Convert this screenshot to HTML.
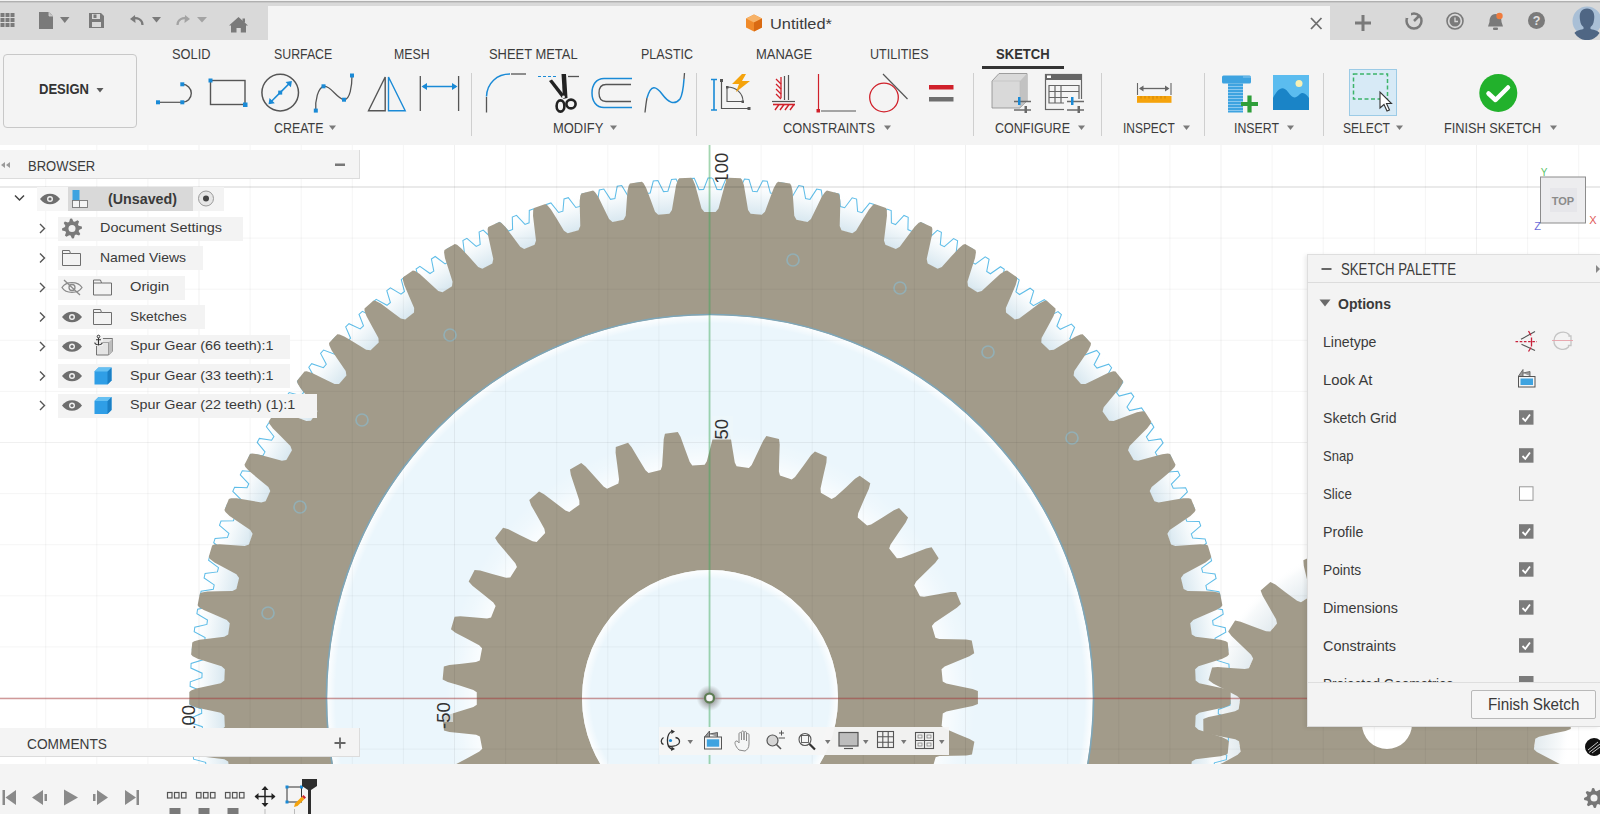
<!DOCTYPE html><html><head><meta charset="utf-8"><style>
*{margin:0;padding:0;box-sizing:border-box}
body{width:1600px;height:814px;overflow:hidden;position:relative;background:#f4f4f4;font-family:"Liberation Sans",sans-serif;color:#3a3a3a}
.a{position:absolute}
.t{position:absolute;white-space:nowrap;line-height:1;transform-origin:0 0}
</style></head><body>
<svg width="1600" height="619" viewBox="0 145 1600 619" style="position:absolute;left:0;top:145px">
<defs><radialGradient id="gapg" gradientUnits="userSpaceOnUse" cx="710" cy="698" r="522"><stop offset="0.93" stop-color="#d9e8f0" stop-opacity="0"/><stop offset="0.931" stop-color="#d9e8f0"/><stop offset="0.965" stop-color="#f1f7fa"/><stop offset="1" stop-color="#ffffff" stop-opacity="0"/></radialGradient><radialGradient id="gapm" gradientUnits="userSpaceOnUse" cx="710" cy="698" r="266"><stop offset="0.875" stop-color="#ffffff" stop-opacity="0"/><stop offset="0.876" stop-color="#ffffff" stop-opacity="0.75"/><stop offset="0.95" stop-color="#ffffff" stop-opacity="0.2"/><stop offset="1" stop-color="#ffffff" stop-opacity="0"/></radialGradient><radialGradient id="gaps" gradientUnits="userSpaceOnUse" cx="1387" cy="724" r="184"><stop offset="0.81" stop-color="#e3ebef" stop-opacity="0"/><stop offset="0.811" stop-color="#e3ebef"/><stop offset="0.95" stop-color="#f8fafb"/><stop offset="1" stop-color="#ffffff" stop-opacity="0"/></radialGradient><radialGradient id="inglow" gradientUnits="userSpaceOnUse" cx="710" cy="698" r="384"><stop offset="0.975" stop-color="#fff" stop-opacity="0"/><stop offset="0.997" stop-color="#fff" stop-opacity="0.9"/></radialGradient><radialGradient id="hglow" gradientUnits="userSpaceOnUse" cx="710" cy="698" r="128"><stop offset="0.93" stop-color="#fff" stop-opacity="0"/><stop offset="0.995" stop-color="#fff" stop-opacity="0.85"/></radialGradient><radialGradient id="omark"><stop offset="0.4" stop-color="#8a8a8a" stop-opacity="0.75"/><stop offset="1" stop-color="#9a9a9a" stop-opacity="0"/></radialGradient></defs>
<rect x="0" y="145" width="1600" height="619" fill="#ffffff"/>
<circle cx="710" cy="698" r="384" fill="#ebf6fc"/><circle cx="710" cy="698" r="384" fill="url(#inglow)"/>
<circle cx="710" cy="698" r="522" fill="url(#gapg)"/>
<circle cx="710" cy="698" r="266" fill="url(#gapm)"/>
<circle cx="1387" cy="724" r="184" fill="url(#gaps)"/>
<path d="M739.4,1217.2 L734.8,1217.4 L729.8,1206.1 L725.3,1206.3 L721.1,1217.9 L716.6,1218.0 L712.0,1206.5 L707.5,1206.5 L702.9,1218.0 L698.3,1217.9 L694.1,1206.3 L689.7,1206.1 L684.6,1217.4 L680.1,1217.1 L676.3,1205.4 L671.8,1205.1 L666.4,1216.2 L661.9,1215.8 L658.5,1203.9 L654.1,1203.4 L648.3,1214.3 L643.7,1213.8 L640.8,1201.8 L636.4,1201.1 L630.2,1211.8 L625.7,1211.1 L623.1,1199.0 L618.8,1198.2 L612.2,1208.7 L607.7,1207.8 L605.6,1195.7 L601.3,1194.7 L594.3,1205.0 L589.9,1203.9 L588.2,1191.7 L583.9,1190.6 L576.6,1200.6 L572.2,1199.4 L571.0,1187.1 L566.7,1185.9 L559.1,1195.6 L554.7,1194.3 L553.9,1181.9 L549.6,1180.6 L541.7,1190.0 L537.4,1188.5 L537.0,1176.2 L532.8,1174.6 L524.5,1183.8 L520.3,1182.2 L520.3,1169.8 L516.2,1168.1 L507.6,1177.0 L503.4,1175.2 L503.9,1162.9 L499.8,1161.0 L490.9,1169.6 L486.8,1167.7 L487.7,1155.3 L483.7,1153.4 L474.5,1161.6 L470.4,1159.5 L471.8,1147.2 L467.8,1145.1 L458.4,1153.1 L454.4,1150.8 L456.2,1138.6 L452.3,1136.4 L442.6,1144.0 L438.7,1141.6 L440.9,1129.4 L437.1,1127.1 L427.1,1134.3 L423.3,1131.8 L425.9,1119.7 L422.2,1117.2 L411.9,1124.1 L408.2,1121.5 L411.3,1109.5 L407.7,1106.9 L397.2,1113.4 L393.5,1110.6 L397.0,1098.8 L393.5,1096.0 L382.8,1102.1 L379.2,1099.2 L383.1,1087.5 L379.7,1084.6 L368.8,1090.4 L365.4,1087.4 L369.7,1075.8 L366.4,1072.8 L355.2,1078.2 L351.9,1075.1 L356.6,1063.6 L353.4,1060.5 L342.1,1065.5 L338.9,1062.3 L344.0,1051.0 L340.9,1047.8 L329.4,1052.4 L326.3,1049.0 L331.8,1037.9 L328.9,1034.6 L317.2,1038.8 L314.3,1035.3 L320.1,1024.5 L317.3,1021.0 L305.5,1024.8 L302.7,1021.2 L308.9,1010.6 L306.2,1007.0 L294.3,1010.4 L291.6,1006.7 L298.2,996.3 L295.6,992.7 L283.6,995.6 L281.0,991.9 L288.0,981.7 L285.5,978.0 L273.4,980.5 L271.0,976.6 L278.3,966.7 L275.9,962.9 L263.8,965.0 L261.4,961.1 L269.1,951.4 L266.9,947.5 L254.7,949.2 L252.5,945.1 L260.5,935.7 L258.4,931.8 L246.1,933.0 L244.1,928.9 L252.4,919.8 L250.5,915.8 L238.2,916.6 L236.3,912.4 L244.9,903.6 L243.1,899.5 L230.8,899.9 L229.0,895.7 L238.0,887.2 L236.4,883.0 L224.0,883.0 L222.4,878.7 L231.7,870.5 L230.2,866.3 L217.8,865.8 L216.4,861.5 L225.9,853.6 L224.5,849.4 L212.2,848.4 L210.9,844.0 L220.7,836.5 L219.5,832.2 L207.3,830.9 L206.1,826.4 L216.2,819.3 L215.1,814.9 L202.9,813.1 L201.9,808.7 L212.2,801.9 L211.3,797.5 L199.2,795.3 L198.3,790.8 L208.9,784.3 L208.1,779.9 L196.1,777.3 L195.4,772.8 L206.2,766.7 L205.6,762.3 L193.6,759.2 L193.1,754.7 L204.1,749.0 L203.6,744.5 L191.8,741.0 L191.4,736.5 L202.6,731.2 L202.3,726.7 L190.6,722.8 L190.4,718.3 L201.7,713.3 L201.6,708.9 L190.0,704.6 L190.0,700.0 L201.5,695.5 L201.5,691.0 L190.1,686.3 L190.3,681.8 L201.9,677.7 L202.1,673.2 L190.9,668.1 L191.1,663.5 L202.9,659.8 L203.3,655.4 L192.2,649.9 L192.7,645.3 L204.6,642.1 L205.1,637.6 L194.2,631.7 L194.8,627.2 L206.9,624.4 L207.5,620.0 L196.9,613.7 L197.6,609.2 L209.8,606.8 L210.6,602.4 L200.2,595.7 L201.1,591.3 L213.3,589.3 L214.2,584.9 L204.1,577.9 L205.1,573.5 L217.4,571.9 L218.5,567.6 L208.6,560.2 L209.8,555.8 L222.1,554.7 L223.4,550.4 L213.7,542.7 L215.1,538.4 L227.4,537.6 L228.9,533.4 L219.5,525.4 L221.0,521.1 L233.4,520.8 L234.9,516.6 L225.8,508.3 L227.5,504.0 L239.9,504.2 L241.6,500.1 L232.8,491.4 L234.6,487.2 L247.0,487.8 L248.8,483.8 L240.3,474.8 L242.3,470.7 L254.6,471.7 L256.6,467.7 L248.5,458.4 L250.6,454.4 L262.9,455.8 L265.0,451.9 L257.2,442.4 L259.4,438.4 L271.6,440.3 L273.9,436.5 L266.4,426.7 L268.8,422.8 L280.9,425.1 L283.4,421.3 L276.2,411.3 L278.7,407.5 L290.8,410.2 L293.3,406.5 L286.5,396.2 L289.2,392.5 L301.1,395.7 L303.8,392.1 L297.4,381.5 L300.2,377.9 L312.0,381.5 L314.8,378.0 L308.8,367.2 L311.7,363.7 L323.4,367.7 L326.3,364.3 L320.6,353.4 L323.6,350.0 L335.2,354.4 L338.2,351.1 L332.9,339.9 L336.1,336.6 L347.5,341.4 L350.6,338.2 L345.7,326.9 L349.0,323.7 L360.2,328.9 L363.5,325.9 L359.0,314.3 L362.4,311.3 L373.4,316.9 L376.7,313.9 L372.7,302.3 L376.2,299.3 L387.0,305.3 L390.4,302.5 L386.8,290.7 L390.4,287.8 L401.0,294.2 L404.5,291.5 L401.3,279.6 L404.9,276.9 L415.3,283.6 L419.0,281.0 L416.1,269.0 L419.9,266.4 L430.0,273.5 L433.8,271.1 L431.4,259.0 L435.2,256.5 L445.1,263.9 L448.9,261.6 L446.9,249.4 L450.9,247.2 L460.5,254.9 L464.4,252.7 L462.9,240.5 L466.9,238.3 L476.2,246.4 L480.2,244.4 L479.1,232.1 L483.2,230.1 L492.2,238.5 L496.2,236.6 L495.6,224.3 L499.7,222.4 L508.5,231.1 L512.6,229.4 L512.3,217.0 L516.5,215.3 L525.0,224.4 L529.1,222.8 L529.3,210.4 L533.6,208.8 L541.7,218.2 L545.9,216.7 L546.5,204.4 L550.9,202.9 L558.6,212.5 L562.9,211.2 L564.0,198.9 L568.3,197.7 L575.8,207.5 L580.1,206.4 L581.6,194.1 L586.0,193.0 L593.1,203.1 L597.4,202.1 L599.3,189.9 L603.8,189.0 L610.5,199.3 L614.9,198.5 L617.2,186.3 L621.7,185.5 L628.1,196.1 L632.5,195.4 L635.2,183.4 L639.8,182.8 L645.7,193.6 L650.2,193.0 L653.3,181.1 L657.9,180.6 L663.5,191.6 L667.9,191.2 L671.5,179.4 L676.1,179.1 L681.3,190.3 L685.7,190.1 L689.7,178.4 L694.3,178.2 L699.1,189.6 L703.6,189.5 L708.0,178.0 L712.6,178.0 L717.0,189.5 L721.4,189.6 L726.2,178.3 L730.8,178.4 L734.8,190.1 L739.3,190.3 L744.5,179.1 L749.0,179.5 L752.6,191.3 L757.1,191.7 L762.7,180.7 L767.2,181.2 L770.4,193.1 L774.8,193.6 L780.8,182.8 L785.3,183.5 L788.0,195.5 L792.5,196.2 L798.8,185.6 L803.3,186.4 L805.6,198.6 L810.0,199.4 L816.7,189.1 L821.2,190.0 L823.1,202.2 L827.4,203.2 L834.5,193.1 L839.0,194.2 L840.4,206.5 L844.7,207.7 L852.2,197.8 L856.6,199.1 L857.6,211.4 L861.9,212.7 L869.6,203.1 L874.0,204.5 L874.6,216.9 L878.8,218.3 L886.9,209.0 L891.2,210.6 L891.4,222.9 L895.5,224.6 L904.0,215.5 L908.2,217.3 L907.9,229.6 L912.0,231.4 L920.8,222.6 L924.9,224.5 L924.2,236.8 L928.3,238.7 L937.3,230.3 L941.4,232.3 L940.3,244.6 L944.3,246.7 L953.6,238.6 L957.6,240.7 L956.1,253.0 L960.0,255.2 L969.6,247.4 L973.5,249.7 L971.5,261.9 L975.3,264.2 L985.2,256.8 L989.1,259.2 L986.7,271.4 L990.4,273.8 L1000.5,266.7 L1004.3,269.3 L1001.5,281.3 L1005.1,283.9 L1015.5,277.2 L1019.2,279.9 L1015.9,291.8 L1019.5,294.5 L1030.1,288.2 L1033.7,291.0 L1030.0,302.8 L1033.4,305.6 L1044.3,299.7 L1047.7,302.6 L1043.7,314.3 L1047.0,317.2 L1058.0,311.6 L1061.4,314.7 L1056.9,326.2 L1060.2,329.3 L1071.4,324.1 L1074.6,327.3 L1069.8,338.6 L1072.9,341.8 L1084.3,337.0 L1087.4,340.3 L1082.1,351.5 L1085.2,354.8 L1096.7,350.4 L1099.8,353.8 L1094.1,364.7 L1097.0,368.1 L1108.7,364.2 L1111.6,367.7 L1105.5,378.4 L1108.3,381.9 L1120.2,378.4 L1122.9,382.0 L1116.5,392.5 L1119.2,396.1 L1131.1,392.9 L1133.8,396.6 L1127.0,407.0 L1129.5,410.6 L1141.6,407.9 L1144.1,411.7 L1136.9,421.8 L1139.3,425.5 L1151.5,423.2 L1153.9,427.1 L1146.4,436.9 L1148.6,440.8 L1160.8,438.9 L1163.1,442.9 L1155.3,452.4 L1157.4,456.3 L1169.7,454.9 L1171.8,458.9 L1163.6,468.2 L1165.6,472.2 L1177.9,471.2 L1179.9,475.3 L1171.4,484.2 L1173.2,488.3 L1185.6,487.7 L1187.4,491.9 L1178.6,500.6 L1180.3,504.7 L1192.7,504.5 L1194.4,508.8 L1185.2,517.1 L1186.8,521.3 L1199.2,521.6 L1200.7,525.9 L1191.3,533.9 L1192.7,538.1 L1205.1,538.9 L1206.4,543.2 L1196.8,550.9 L1198.0,555.2 L1210.3,556.3 L1211.6,560.7 L1201.6,568.1 L1202.7,572.4 L1215.0,574.0 L1216.1,578.4 L1205.9,585.4 L1206.8,589.8 L1219.0,591.8 L1220.0,596.3 L1209.5,602.9 L1210.3,607.3 L1222.5,609.7 L1223.2,614.2 L1212.6,620.5 L1213.2,624.9 L1225.2,627.8 L1225.8,632.3 L1215.0,638.2 L1215.5,642.6 L1227.4,645.9 L1227.8,650.4 L1216.8,655.9 L1217.1,660.4 L1228.9,664.1 L1229.2,668.6 L1217.9,673.7 L1218.1,678.2 L1229.8,682.3 L1229.9,686.9 L1218.5,691.6 L1218.5,696.0 L1230.0,700.6 L1230.0,705.1 L1218.4,709.4 L1218.3,713.9 L1229.6,718.8 L1229.4,723.4 L1217.7,727.3 L1217.4,731.7 L1228.5,737.0 L1228.2,741.6 L1216.3,745.1 L1215.9,749.5 L1226.8,755.2 L1226.3,759.7 L1214.4,762.8 L1213.8,767.2 L1224.5,773.3 L1223.8,777.8 L1211.8,780.5 L1211.0,784.9 L1221.6,791.3 L1220.7,795.8 L1208.6,798.0 L1207.7,802.4 L1218.0,809.2 L1217.0,813.7 L1204.8,815.4 L1203.7,819.8 L1213.8,827.0 L1212.6,831.4 L1200.3,832.7 L1199.1,837.0 L1208.9,844.6 L1207.6,848.9 L1195.3,849.9 L1193.9,854.1 L1203.5,862.0 L1202.0,866.3 L1189.7,866.8 L1188.2,871.0 L1197.4,879.2 L1195.8,883.5 L1183.4,883.5 L1181.8,887.7 L1190.7,896.2 L1189.0,900.4 L1176.6,900.0 L1174.9,904.1 L1183.5,912.9 L1181.6,917.1 L1169.3,916.3 L1167.3,920.3 L1175.7,929.4 L1173.6,933.5 L1161.3,932.3 L1159.2,936.2 L1167.3,945.6 L1165.1,949.6 L1152.8,948.0 L1150.6,951.8 L1158.3,961.5 L1156.0,965.4 L1143.8,963.3 L1141.4,967.1 L1148.8,977.1 L1146.3,980.9 L1134.2,978.4 L1131.7,982.1 L1138.7,992.3 L1136.1,996.1 L1124.1,993.1 L1121.5,996.7 L1128.1,1007.2 L1125.4,1010.8 L1113.5,1007.5 L1110.8,1011.0 L1117.0,1021.7 L1114.1,1025.2 L1102.4,1021.4 L1099.5,1024.9 L1105.4,1035.7 L1102.4,1039.2 L1090.8,1035.0 L1087.8,1038.3 L1093.3,1049.4 L1090.2,1052.8 L1078.7,1048.2 L1075.6,1051.4 L1080.7,1062.6 L1077.5,1065.9 L1066.2,1060.9 L1063.0,1064.0 L1067.7,1075.4 L1064.4,1078.6 L1053.2,1073.2 L1049.9,1076.2 L1054.2,1087.8 L1050.8,1090.8 L1039.9,1085.0 L1036.5,1087.9 L1040.3,1099.6 L1036.8,1102.5 L1026.1,1096.3 L1022.6,1099.1 L1026.0,1110.9 L1022.4,1113.7 L1011.9,1107.2 L1008.3,1109.8 L1011.4,1121.8 L1007.6,1124.4 L997.4,1117.5 L993.7,1120.0 L996.3,1132.1 L992.5,1134.6 L982.5,1127.3 L978.7,1129.7 L980.9,1141.9 L977.0,1144.2 L967.2,1136.6 L963.4,1138.9 L965.1,1151.1 L961.2,1153.3 L951.7,1145.4 L947.7,1147.5 L949.1,1159.8 L945.0,1161.9 L935.8,1153.6 L931.8,1155.6 L932.7,1167.9 L928.6,1169.8 L919.7,1161.2 L915.6,1163.1 L916.1,1175.4 L911.9,1177.2 L903.3,1168.3 L899.2,1170.0 L899.2,1182.4 L895.0,1184.0 L886.7,1174.8 L882.5,1176.3 L882.1,1188.7 L877.8,1190.2 L869.9,1180.7 L865.6,1182.1 L864.8,1194.4 L860.4,1195.8 L852.8,1186.0 L848.5,1187.3 L847.3,1199.6 L842.9,1200.7 L835.6,1190.7 L831.3,1191.8 L829.6,1204.1 L825.1,1205.1 L818.2,1194.8 L813.9,1195.8 L811.7,1208.0 L807.3,1208.8 L800.7,1198.3 L796.3,1199.1 L793.8,1211.2 L789.3,1211.9 L783.1,1201.2 L778.7,1201.8 L775.7,1213.8 L771.2,1214.4 L765.4,1203.5 L761.0,1203.9 L757.6,1215.8 L753.0,1216.2 L747.6,1205.1 L743.2,1205.4 L739.4,1217.2 L734.8,1217.4 L729.8,1206.1 L725.3,1206.3 L721.1,1217.9 L716.6,1218.0 L712.0,1206.5 L707.5,1206.5 L702.9,1218.0 L698.3,1217.9 L694.1,1206.3 L689.7,1206.1" fill="none" stroke="#5fbde8" stroke-width="1.05"/>
<text transform="translate(194.55,742) rotate(-90)" font-family="Liberation Sans" font-size="18.5" fill="#333">-100</text>
<rect x="712" y="148" width="21" height="30" fill="#ffffff" fill-opacity="0.85"/>
<text transform="translate(727.75,183.65) rotate(-90)" font-family="Liberation Sans" font-size="18.5" fill="#333">100</text>
<path d="M715.63,212.03 L718.50,208.60 L722.16,194.80 L724.95,184.46 L727.20,179.32 L728.78,177.64 L740.77,178.21 L742.18,180.03 L743.93,185.36 L745.73,195.92 L748.06,210.01 L750.59,213.70 L761.80,214.77 L764.98,211.63 L769.94,198.23 L773.70,188.20 L776.43,183.30 L778.16,181.78 L790.04,183.49 L791.27,185.44 L792.51,190.91 L793.29,201.59 L794.27,215.84 L796.44,219.75 L807.50,221.88 L810.96,219.06 L817.17,206.19 L821.87,196.57 L825.05,191.95 L826.92,190.60 L838.58,193.43 L839.63,195.48 L840.33,201.05 L840.10,211.75 L839.72,226.03 L841.51,230.13 L852.32,233.30 L856.03,230.82 L863.43,218.61 L869.03,209.47 L872.63,205.18 L874.62,204.01 L885.96,207.93 L886.81,210.08 L886.98,215.69 L885.73,226.32 L884.00,240.50 L885.39,244.75 L895.85,248.94 L899.78,246.82 L908.31,235.36 L914.75,226.80 L918.74,222.87 L920.83,221.89 L931.75,226.88 L932.39,229.10 L932.03,234.69 L929.77,245.16 L926.70,259.11 L927.68,263.47 L937.69,268.64 L941.81,266.90 L951.39,256.31 L958.61,248.40 L962.96,244.86 L965.14,244.09 L975.53,250.09 L975.95,252.36 L975.06,257.90 L971.82,268.11 L967.44,281.70 L967.99,286.13 L977.47,292.22 L981.74,290.89 L992.28,281.25 L1000.22,274.06 L1004.89,270.96 L1007.13,270.40 L1016.90,277.36 L1017.11,279.66 L1015.70,285.09 L1011.50,294.94 L1005.84,308.06 L1005.98,312.52 L1014.83,319.49 L1019.20,318.56 L1030.62,309.97 L1039.20,303.57 L1044.15,300.92 L1046.43,300.58 L1055.50,308.44 L1055.48,310.74 L1053.56,316.01 L1048.45,325.42 L1041.57,337.94 L1041.28,342.40 L1049.43,350.18 L1053.87,349.67 L1066.05,342.20 L1075.21,336.65 L1080.38,334.48 L1082.68,334.36 L1090.96,343.04 L1090.73,345.34 L1088.32,350.40 L1082.33,359.28 L1074.30,371.09 L1073.58,375.50 L1080.96,384.02 L1085.43,383.94 L1098.26,377.66 L1107.90,373.00 L1113.26,371.34 L1115.56,371.43 L1122.98,380.86 L1122.53,383.13 L1119.65,387.94 L1112.84,396.21 L1103.72,407.20 L1102.59,411.52 L1109.13,420.70 L1113.58,421.04 L1126.95,416.02 L1136.99,412.30 L1142.48,411.15 L1144.77,411.46 L1151.26,421.55 L1150.59,423.76 L1147.26,428.28 L1139.71,435.87 L1129.58,445.94 L1128.04,450.14 L1133.68,459.90 L1138.08,460.66 L1151.87,456.93 L1162.22,454.18 L1167.79,453.56 L1170.04,454.08 L1175.54,464.75 L1174.66,466.89 L1170.92,471.07 L1162.68,477.90 L1151.64,486.97 L1149.71,491.00 L1154.39,501.25 L1158.70,502.43 L1172.78,500.02 L1183.35,498.27 L1188.95,498.18 L1191.14,498.92 L1195.60,510.06 L1194.53,512.10 L1190.41,515.91 L1181.55,521.93 L1169.70,529.90 L1167.40,533.73 L1171.08,544.38 L1175.26,545.97 L1189.50,544.91 L1200.19,544.17 L1205.78,544.61 L1207.88,545.55 L1211.27,557.07 L1210.00,559.00 L1205.54,562.40 L1196.15,567.55 L1183.60,574.36 L1180.94,577.95 L1183.60,588.90 L1187.60,590.88 L1201.89,591.18 L1212.59,591.46 L1218.11,592.43 L1220.12,593.57 L1222.39,605.35 L1220.95,607.16 L1216.19,610.11 L1206.35,614.35 L1193.21,619.94 L1190.22,623.26 L1191.82,634.42 L1195.62,636.76 L1209.81,638.42 L1220.44,639.72 L1225.85,641.21 L1227.74,642.53 L1228.88,654.48 L1227.27,656.14 L1222.25,658.63 L1212.05,661.91 L1198.44,666.22 L1195.15,669.25 L1195.68,680.50 L1199.25,683.20 L1213.21,686.20 L1223.67,688.50 L1228.91,690.50 L1230.67,692.00 L1230.67,704.00 L1228.91,705.50 L1223.67,707.50 L1213.21,709.80 L1199.25,712.80 L1195.68,715.50 L1195.15,726.75 L1198.44,729.78 L1212.05,734.09 L1222.25,737.37 L1227.27,739.86 L1228.88,741.52 L1227.74,753.47 L1225.85,754.79 L1220.44,756.28 L1209.81,757.58 L1195.62,759.24 L1191.82,761.58 L1190.22,772.74 L1193.21,776.06 L1206.35,781.65 L1216.19,785.89 L1220.95,788.84 L1222.39,790.65 L1220.12,802.43 L1218.11,803.57 L1212.59,804.54 L1201.89,804.82 L1187.60,805.12 L1183.60,807.10 L1180.94,818.05 L1183.60,821.64 L1196.15,828.45 L1205.54,833.60 L1210.00,837.00 L1211.27,838.93 L1207.88,850.45 L1205.78,851.39 L1200.19,851.83 L1189.50,851.09 L1175.26,850.03 L1171.08,851.62 L1167.40,862.27 L1169.70,866.10 L1181.55,874.07 L1190.41,880.09 L1194.53,883.90 L1195.60,885.94 L1191.14,897.08 L1188.95,897.82 L1183.35,897.73 L1172.78,895.98 L1158.70,893.57 L1154.39,894.75 L1149.71,905.00 L1151.64,909.03 L1162.68,918.10 L1170.92,924.93 L1174.66,929.11 L1175.54,931.25 L1170.04,941.92 L1167.79,942.44 L1162.22,941.82 L1151.87,939.07 L1138.08,935.34 L1133.68,936.10 L1128.04,945.86 L1129.58,950.06 L1139.71,960.13 L1147.26,967.72 L1150.59,972.24 L1151.26,974.45 L1144.77,984.54 L1142.48,984.85 L1136.99,983.70 L1126.95,979.98 L1113.58,974.96 L1109.13,975.30 L1102.59,984.48 L1103.72,988.80 L1112.84,999.79 L1119.65,1008.06 L1122.53,1012.87 L1122.98,1015.14 L1115.56,1024.57 L1113.26,1024.66 L1107.90,1023.00 L1098.26,1018.34 L1085.43,1012.06 L1080.96,1011.98 L1073.58,1020.50 L1074.30,1024.91 L1082.33,1036.72 L1088.32,1045.60 L1090.73,1050.66 L1090.96,1052.96 L1082.68,1061.64 L1080.38,1061.52 L1075.21,1059.35 L1066.05,1053.80 L1053.87,1046.33 L1049.43,1045.82 L1041.28,1053.60 L1041.57,1058.06 L1048.45,1070.58 L1053.56,1079.99 L1055.48,1085.26 L1055.50,1087.56 L1046.43,1095.42 L1044.15,1095.08 L1039.20,1092.43 L1030.62,1086.03 L1019.20,1077.44 L1014.83,1076.51 L1005.98,1083.48 L1005.84,1087.94 L1011.50,1101.06 L1015.70,1110.91 L1017.11,1116.34 L1016.90,1118.64 L1007.13,1125.60 L1004.89,1125.04 L1000.22,1121.94 L992.28,1114.75 L981.74,1105.11 L977.47,1103.78 L967.99,1109.87 L967.44,1114.30 L971.82,1127.89 L975.06,1138.10 L975.95,1143.64 L975.53,1145.91 L965.14,1151.91 L962.96,1151.14 L958.61,1147.60 L951.39,1139.69 L941.81,1129.10 L937.69,1127.36 L927.68,1132.53 L926.70,1136.89 L929.77,1150.84 L932.03,1161.31 L932.39,1166.90 L931.75,1169.12 L920.83,1174.11 L918.74,1173.13 L914.75,1169.20 L908.31,1160.64 L899.78,1149.18 L895.85,1147.06 L885.39,1151.25 L884.00,1155.50 L885.73,1169.68 L886.98,1180.31 L886.81,1185.92 L885.96,1188.07 L874.62,1191.99 L872.63,1190.82 L869.03,1186.53 L863.43,1177.39 L856.03,1165.18 L852.32,1162.70 L841.51,1165.87 L839.72,1169.97 L840.10,1184.25 L840.33,1194.95 L839.63,1200.52 L838.58,1202.57 L826.92,1205.40 L825.05,1204.05 L821.87,1199.43 L817.17,1189.81 L810.96,1176.94 L807.50,1174.12 L796.44,1176.25 L794.27,1180.16 L793.29,1194.41 L792.51,1205.09 L791.27,1210.56 L790.04,1212.51 L778.16,1214.22 L776.43,1212.70 L773.70,1207.80 L769.94,1197.77 L764.98,1184.37 L761.80,1181.23 L750.59,1182.30 L748.06,1185.99 L745.73,1200.08 L743.93,1210.64 L742.18,1215.97 L740.77,1217.79 L728.78,1218.36 L727.20,1216.68 L724.95,1211.54 L722.16,1201.20 L718.50,1187.40 L715.63,1183.97 L704.37,1183.97 L701.50,1187.40 L697.84,1201.20 L695.05,1211.54 L692.80,1216.68 L691.22,1218.36 L679.23,1217.79 L677.82,1215.97 L676.07,1210.64 L674.27,1200.08 L671.94,1185.99 L669.41,1182.30 L658.20,1181.23 L655.02,1184.37 L650.06,1197.77 L646.30,1207.80 L643.57,1212.70 L641.84,1214.22 L629.96,1212.51 L628.73,1210.56 L627.49,1205.09 L626.71,1194.41 L625.73,1180.16 L623.56,1176.25 L612.50,1174.12 L609.04,1176.94 L602.83,1189.81 L598.13,1199.43 L594.95,1204.05 L593.08,1205.40 L581.42,1202.57 L580.37,1200.52 L579.67,1194.95 L579.90,1184.25 L580.28,1169.97 L578.49,1165.87 L567.68,1162.70 L563.97,1165.18 L556.57,1177.39 L550.97,1186.53 L547.37,1190.82 L545.38,1191.99 L534.04,1188.07 L533.19,1185.92 L533.02,1180.31 L534.27,1169.68 L536.00,1155.50 L534.61,1151.25 L524.15,1147.06 L520.22,1149.18 L511.69,1160.64 L505.25,1169.20 L501.26,1173.13 L499.17,1174.11 L488.25,1169.12 L487.61,1166.90 L487.97,1161.31 L490.23,1150.84 L493.30,1136.89 L492.32,1132.53 L482.31,1127.36 L478.19,1129.10 L468.61,1139.69 L461.39,1147.60 L457.04,1151.14 L454.86,1151.91 L444.47,1145.91 L444.05,1143.64 L444.94,1138.10 L448.18,1127.89 L452.56,1114.30 L452.01,1109.87 L442.53,1103.78 L438.26,1105.11 L427.72,1114.75 L419.78,1121.94 L415.11,1125.04 L412.87,1125.60 L403.10,1118.64 L402.89,1116.34 L404.30,1110.91 L408.50,1101.06 L414.16,1087.94 L414.02,1083.48 L405.17,1076.51 L400.80,1077.44 L389.38,1086.03 L380.80,1092.43 L375.85,1095.08 L373.57,1095.42 L364.50,1087.56 L364.52,1085.26 L366.44,1079.99 L371.55,1070.58 L378.43,1058.06 L378.72,1053.60 L370.57,1045.82 L366.13,1046.33 L353.95,1053.80 L344.79,1059.35 L339.62,1061.52 L337.32,1061.64 L329.04,1052.96 L329.27,1050.66 L331.68,1045.60 L337.67,1036.72 L345.70,1024.91 L346.42,1020.50 L339.04,1011.98 L334.57,1012.06 L321.74,1018.34 L312.10,1023.00 L306.74,1024.66 L304.44,1024.57 L297.02,1015.14 L297.47,1012.87 L300.35,1008.06 L307.16,999.79 L316.28,988.80 L317.41,984.48 L310.87,975.30 L306.42,974.96 L293.05,979.98 L283.01,983.70 L277.52,984.85 L275.23,984.54 L268.74,974.45 L269.41,972.24 L272.74,967.72 L280.29,960.13 L290.42,950.06 L291.96,945.86 L286.32,936.10 L281.92,935.34 L268.13,939.07 L257.78,941.82 L252.21,942.44 L249.96,941.92 L244.46,931.25 L245.34,929.11 L249.08,924.93 L257.32,918.10 L268.36,909.03 L270.29,905.00 L265.61,894.75 L261.30,893.57 L247.22,895.98 L236.65,897.73 L231.05,897.82 L228.86,897.08 L224.40,885.94 L225.47,883.90 L229.59,880.09 L238.45,874.07 L250.30,866.10 L252.60,862.27 L248.92,851.62 L244.74,850.03 L230.50,851.09 L219.81,851.83 L214.22,851.39 L212.12,850.45 L208.73,838.93 L210.00,837.00 L214.46,833.60 L223.85,828.45 L236.40,821.64 L239.06,818.05 L236.40,807.10 L232.40,805.12 L218.11,804.82 L207.41,804.54 L201.89,803.57 L199.88,802.43 L197.61,790.65 L199.05,788.84 L203.81,785.89 L213.65,781.65 L226.79,776.06 L229.78,772.74 L228.18,761.58 L224.38,759.24 L210.19,757.58 L199.56,756.28 L194.15,754.79 L192.26,753.47 L191.12,741.52 L192.73,739.86 L197.75,737.37 L207.95,734.09 L221.56,729.78 L224.85,726.75 L224.32,715.50 L220.75,712.80 L206.79,709.80 L196.33,707.50 L191.09,705.50 L189.33,704.00 L189.33,692.00 L191.09,690.50 L196.33,688.50 L206.79,686.20 L220.75,683.20 L224.32,680.50 L224.85,669.25 L221.56,666.22 L207.95,661.91 L197.75,658.63 L192.73,656.14 L191.12,654.48 L192.26,642.53 L194.15,641.21 L199.56,639.72 L210.19,638.42 L224.38,636.76 L228.18,634.42 L229.78,623.26 L226.79,619.94 L213.65,614.35 L203.81,610.11 L199.05,607.16 L197.61,605.35 L199.88,593.57 L201.89,592.43 L207.41,591.46 L218.11,591.18 L232.40,590.88 L236.40,588.90 L239.06,577.95 L236.40,574.36 L223.85,567.55 L214.46,562.40 L210.00,559.00 L208.73,557.07 L212.12,545.55 L214.22,544.61 L219.81,544.17 L230.50,544.91 L244.74,545.97 L248.92,544.38 L252.60,533.73 L250.30,529.90 L238.45,521.93 L229.59,515.91 L225.47,512.10 L224.40,510.06 L228.86,498.92 L231.05,498.18 L236.65,498.27 L247.22,500.02 L261.30,502.43 L265.61,501.25 L270.29,491.00 L268.36,486.97 L257.32,477.90 L249.08,471.07 L245.34,466.89 L244.46,464.75 L249.96,454.08 L252.21,453.56 L257.78,454.18 L268.13,456.93 L281.92,460.66 L286.32,459.90 L291.96,450.14 L290.42,445.94 L280.29,435.87 L272.74,428.28 L269.41,423.76 L268.74,421.55 L275.23,411.46 L277.52,411.15 L283.01,412.30 L293.05,416.02 L306.42,421.04 L310.87,420.70 L317.41,411.52 L316.28,407.20 L307.16,396.21 L300.35,387.94 L297.47,383.13 L297.02,380.86 L304.44,371.43 L306.74,371.34 L312.10,373.00 L321.74,377.66 L334.57,383.94 L339.04,384.02 L346.42,375.50 L345.70,371.09 L337.67,359.28 L331.68,350.40 L329.27,345.34 L329.04,343.04 L337.32,334.36 L339.62,334.48 L344.79,336.65 L353.95,342.20 L366.13,349.67 L370.57,350.18 L378.72,342.40 L378.43,337.94 L371.55,325.42 L366.44,316.01 L364.52,310.74 L364.50,308.44 L373.57,300.58 L375.85,300.92 L380.80,303.57 L389.38,309.97 L400.80,318.56 L405.17,319.49 L414.02,312.52 L414.16,308.06 L408.50,294.94 L404.30,285.09 L402.89,279.66 L403.10,277.36 L412.87,270.40 L415.11,270.96 L419.78,274.06 L427.72,281.25 L438.26,290.89 L442.53,292.22 L452.01,286.13 L452.56,281.70 L448.18,268.11 L444.94,257.90 L444.05,252.36 L444.47,250.09 L454.86,244.09 L457.04,244.86 L461.39,248.40 L468.61,256.31 L478.19,266.90 L482.31,268.64 L492.32,263.47 L493.30,259.11 L490.23,245.16 L487.97,234.69 L487.61,229.10 L488.25,226.88 L499.17,221.89 L501.26,222.87 L505.25,226.80 L511.69,235.36 L520.22,246.82 L524.15,248.94 L534.61,244.75 L536.00,240.50 L534.27,226.32 L533.02,215.69 L533.19,210.08 L534.04,207.93 L545.38,204.01 L547.37,205.18 L550.97,209.47 L556.57,218.61 L563.97,230.82 L567.68,233.30 L578.49,230.13 L580.28,226.03 L579.90,211.75 L579.67,201.05 L580.37,195.48 L581.42,193.43 L593.08,190.60 L594.95,191.95 L598.13,196.57 L602.83,206.19 L609.04,219.06 L612.50,221.88 L623.56,219.75 L625.73,215.84 L626.71,201.59 L627.49,190.91 L628.73,185.44 L629.96,183.49 L641.84,181.78 L643.57,183.30 L646.30,188.20 L650.06,198.23 L655.02,211.63 L658.20,214.77 L669.41,213.70 L671.94,210.01 L674.27,195.92 L676.07,185.36 L677.82,180.03 L679.23,178.21 L691.22,177.64 L692.80,179.32 L695.05,184.46 L697.84,194.80 L701.50,208.60 L704.37,212.03Z M327.00,698.00 a383.00,383.00 0 1,0 766.00,0 a383.00,383.00 0 1,0 -766.00,0Z" fill="#a29b8a" fill-rule="evenodd"/>
<circle cx="710" cy="698" r="383.5" fill="none" stroke="#7ea6b8" stroke-width="1.6"/>
<path d="M704.67,464.76 L706.83,461.25 L710.46,447.35 L713.52,435.23 L715.75,430.06 L728.74,430.66 L730.50,436.01 L732.43,448.36 L734.78,462.53 L736.61,466.22 L748.91,467.97 L751.69,464.93 L757.89,451.97 L763.18,440.64 L766.36,435.99 L779.00,439.03 L779.71,444.62 L779.27,457.11 L778.90,471.48 L779.99,475.45 L791.74,479.49 L795.04,477.03 L803.59,465.48 L810.93,455.36 L814.92,451.39 L826.76,456.77 L826.40,462.39 L823.61,474.58 L820.52,488.61 L820.85,492.72 L831.61,498.90 L835.33,497.12 L845.90,487.39 L855.02,478.84 L859.70,475.71 L870.30,483.23 L868.89,488.68 L863.84,500.11 L858.15,513.31 L857.69,517.40 L867.09,525.52 L871.08,524.47 L883.30,516.91 L893.88,510.25 L899.06,508.06 L908.05,517.45 L905.63,522.53 L898.51,532.80 L890.43,544.68 L889.20,548.62 L896.90,558.37 L901.01,558.09 L914.44,552.99 L926.09,548.44 L931.59,547.27 L938.64,558.19 L935.30,562.72 L926.37,571.46 L916.18,581.60 L914.24,585.23 L919.95,596.26 L924.04,596.76 L938.19,594.30 L950.49,592.04 L956.12,591.93 L960.97,603.99 L956.83,607.81 L946.40,614.70 L934.49,622.72 L931.89,625.92 L935.41,637.83 L939.33,639.10 L953.69,639.36 L966.19,639.47 L971.74,640.42 L974.23,653.18 L969.44,656.15 L957.90,660.94 L944.67,666.57 L941.52,669.22 L942.72,681.58 L946.33,683.57 L960.39,686.53 L972.64,689.01 L977.91,691.00 L977.93,704.00 L972.67,706.01 L960.43,708.53 L946.38,711.55 L942.78,713.55 L941.62,725.92 L944.79,728.55 L958.03,734.13 L969.60,738.88 L974.39,741.83 L971.96,754.60 L966.41,755.57 L953.91,755.73 L939.55,756.04 L935.63,757.32 L932.15,769.25 L934.77,772.43 L946.71,780.42 L957.17,787.27 L961.32,791.07 L956.51,803.15 L950.88,803.06 L938.58,800.85 L924.41,798.43 L920.33,798.95 L914.66,810.00 L916.62,813.63 L926.84,823.72 L935.81,832.43 L939.16,836.95 L932.16,847.90 L926.65,846.75 L914.98,842.25 L901.53,837.20 L897.42,836.93 L889.76,846.71 L891.00,850.64 L899.13,862.49 L906.29,872.74 L908.73,877.81 L899.77,887.24 L894.58,885.06 L883.98,878.43 L871.73,870.93 L867.74,869.89 L858.37,878.04 L858.84,882.14 L864.58,895.31 L869.67,906.73 L871.11,912.17 L860.53,919.73 L855.84,916.61 L846.69,908.10 L836.08,898.41 L832.36,896.64 L821.61,902.87 L821.30,906.98 L824.44,921.00 L827.28,933.17 L827.66,938.79 L815.85,944.21 L811.84,940.26 L804.46,930.17 L795.87,918.65 L792.55,916.21 L780.83,920.29 L779.74,924.26 L780.17,938.63 L780.66,951.12 L779.97,956.71 L767.34,959.79 L764.15,955.16 L758.81,943.85 L752.56,930.91 L749.77,927.89 L737.48,929.68 L735.66,933.38 L733.37,947.56 L731.48,959.92 L729.74,965.27 L716.76,965.91 L714.50,960.76 L711.40,948.65 L707.71,934.76 L705.54,931.26 L693.14,930.69 L690.65,933.98 L685.71,947.47 L681.52,959.25 L678.80,964.18 L665.93,962.35 L664.69,956.86 L663.94,944.38 L662.95,930.05 L661.48,926.20 L649.40,923.29 L646.34,926.05 L638.94,938.37 L632.59,949.14 L628.99,953.46 L616.70,949.24 L616.52,943.61 L618.14,931.21 L619.88,916.95 L619.17,912.89 L607.86,907.75 L604.34,909.88 L594.74,920.57 L586.47,929.95 L582.11,933.52 L570.84,927.04 L571.73,921.48 L575.67,909.61 L580.07,895.94 L580.14,891.82 L570.01,884.63 L566.15,886.06 L554.70,894.74 L544.80,902.38 L539.85,905.06 L530.01,896.56 L531.93,891.27 L538.05,880.37 L544.96,867.77 L545.81,863.74 L537.22,854.77 L533.16,855.44 L520.27,861.79 L509.11,867.42 L503.74,869.11 L495.68,858.91 L498.58,854.08 L506.64,844.53 L515.82,833.47 L517.41,829.67 L510.67,819.24 L506.56,819.12 L492.70,822.93 L480.67,826.34 L475.08,826.99 L469.10,815.44 L472.86,811.25 L482.59,803.40 L493.69,794.27 L495.97,790.84 L491.33,779.32 L487.31,778.43 L472.98,779.54 L460.53,780.62 L454.92,780.20 L451.23,767.73 L455.71,764.32 L466.75,758.45 L479.38,751.60 L482.27,748.66 L479.89,736.47 L476.11,734.83 L461.84,733.21 L449.40,731.92 L443.97,730.44 L442.71,717.50 L447.76,715.00 L459.70,711.32 L473.40,706.98 L476.79,704.65 L476.77,692.23 L473.37,689.90 L459.66,685.61 L447.69,681.98 L442.64,679.50 L443.85,666.56 L449.28,665.06 L461.71,663.72 L475.98,662.04 L479.75,660.39 L482.08,648.19 L479.18,645.27 L466.52,638.46 L455.46,632.63 L450.97,629.24 L454.61,616.76 L460.22,616.31 L472.68,617.34 L487.01,618.40 L491.03,617.50 L495.62,605.96 L493.33,602.54 L482.19,593.46 L472.44,585.64 L468.67,581.46 L474.60,569.90 L480.20,570.52 L492.23,573.89 L506.10,577.64 L510.22,577.51 L516.92,567.05 L515.31,563.26 L506.09,552.23 L497.99,542.71 L495.08,537.89 L503.10,527.66 L508.47,529.33 L519.66,534.92 L532.57,541.23 L536.64,541.88 L545.19,532.88 L544.33,528.85 L537.37,516.28 L531.21,505.40 L529.27,500.11 L539.07,491.58 L544.04,494.24 L553.96,501.84 L565.44,510.48 L569.31,511.89 L579.42,504.67 L579.33,500.55 L574.88,486.89 L570.89,475.04 L569.98,469.48 L581.23,462.96 L585.60,466.52 L593.90,475.86 L603.54,486.51 L607.08,488.63 L618.36,483.45 L619.06,479.39 L617.27,465.13 L615.60,452.74 L615.76,447.12 L628.04,442.84 L631.65,447.16 L638.04,457.90 L645.49,470.19 L648.56,472.94 L660.62,469.98 L662.08,466.13 L663.02,451.79 L663.72,439.31 L664.94,433.81 L677.81,431.94 L680.54,436.86 L684.78,448.62 L689.77,462.10 L692.27,465.38Z M582.00,698.00 a128.00,128.00 0 1,0 256.00,0 a128.00,128.00 0 1,0 -256.00,0Z" fill="#a29b8a" fill-rule="evenodd"/>
<circle cx="710" cy="698" r="128" fill="url(#hglow)"/>
<path d="M1535.00,706.74 L1538.71,708.70 L1552.93,711.56 L1565.30,713.95 L1570.62,715.90 L1570.73,728.90 L1565.45,730.94 L1553.13,733.54 L1538.95,736.65 L1535.28,738.68 L1533.86,749.13 L1536.88,752.06 L1549.72,758.81 L1560.91,764.59 L1565.47,767.96 L1561.91,780.46 L1556.26,780.93 L1543.71,779.96 L1529.23,778.95 L1525.13,779.86 L1520.84,789.49 L1522.90,793.15 L1533.32,803.25 L1542.43,811.94 L1545.85,816.46 L1538.92,827.45 L1533.37,826.31 L1521.60,821.84 L1507.99,816.80 L1503.80,816.51 L1496.96,824.54 L1497.92,828.63 L1505.07,841.26 L1511.36,852.16 L1513.37,857.47 L1503.62,866.06 L1498.61,863.40 L1488.58,855.80 L1476.94,847.13 L1473.01,845.67 L1464.18,851.45 L1463.94,855.64 L1467.25,869.77 L1470.21,882.01 L1470.65,887.66 L1458.87,893.16 L1454.82,889.20 L1447.33,879.08 L1438.61,867.48 L1435.25,864.97 L1425.15,868.03 L1423.74,871.99 L1422.93,886.47 L1422.33,899.05 L1421.15,904.60 L1408.30,906.56 L1405.53,901.62 L1401.20,889.79 L1396.10,876.21 L1393.58,872.85 L1383.02,872.95 L1380.56,876.34 L1375.70,890.02 L1371.58,901.91 L1368.89,906.91 L1356.01,905.17 L1354.74,899.64 L1353.91,887.08 L1352.85,872.61 L1351.37,868.68 L1341.22,865.79 L1337.90,868.36 L1329.38,880.11 L1322.08,890.36 L1318.09,894.39 L1306.22,889.10 L1306.56,883.44 L1309.31,871.15 L1312.36,856.97 L1312.05,852.78 L1303.13,847.15 L1299.22,848.68 L1287.74,857.55 L1277.84,865.33 L1272.88,868.08 L1262.98,859.65 L1264.90,854.32 L1271.00,843.30 L1277.93,830.55 L1278.81,826.45 L1271.83,818.53 L1267.65,818.90 L1254.13,824.18 L1242.44,828.85 L1236.91,830.09 L1229.79,819.22 L1233.13,814.64 L1242.09,805.79 L1252.33,795.51 L1254.33,791.82 L1249.86,782.26 L1245.75,781.43 L1231.29,782.69 L1218.76,783.88 L1213.10,783.51 L1209.33,771.07 L1213.83,767.62 L1224.91,761.65 L1237.64,754.67 L1240.60,751.69 L1239.00,741.26 L1235.29,739.30 L1221.07,736.44 L1208.70,734.05 L1203.38,732.10 L1203.27,719.10 L1208.55,717.06 L1220.87,714.46 L1235.05,711.35 L1238.72,709.32 L1240.14,698.87 L1237.12,695.94 L1224.28,689.19 L1213.09,683.41 L1208.53,680.04 L1212.09,667.54 L1217.74,667.07 L1230.29,668.04 L1244.77,669.05 L1248.87,668.14 L1253.16,658.51 L1251.10,654.85 L1240.68,644.75 L1231.57,636.06 L1228.15,631.54 L1235.08,620.55 L1240.63,621.69 L1252.40,626.16 L1266.01,631.20 L1270.20,631.49 L1277.04,623.46 L1276.08,619.37 L1268.93,606.74 L1262.64,595.84 L1260.63,590.53 L1270.38,581.94 L1275.39,584.60 L1285.42,592.20 L1297.06,600.87 L1300.99,602.33 L1309.82,596.55 L1310.06,592.36 L1306.75,578.23 L1303.79,565.99 L1303.35,560.34 L1315.13,554.84 L1319.18,558.80 L1326.67,568.92 L1335.39,580.52 L1338.75,583.03 L1348.85,579.97 L1350.26,576.01 L1351.07,561.53 L1351.67,548.95 L1352.85,543.40 L1365.70,541.44 L1368.47,546.38 L1372.80,558.21 L1377.90,571.79 L1380.42,575.15 L1390.98,575.05 L1393.44,571.66 L1398.30,557.98 L1402.42,546.09 L1405.11,541.09 L1417.99,542.83 L1419.26,548.36 L1420.09,560.92 L1421.15,575.39 L1422.63,579.32 L1432.78,582.21 L1436.10,579.64 L1444.62,567.89 L1451.92,557.64 L1455.91,553.61 L1467.78,558.90 L1467.44,564.56 L1464.69,576.85 L1461.64,591.03 L1461.95,595.22 L1470.87,600.85 L1474.78,599.32 L1486.26,590.45 L1496.16,582.67 L1501.12,579.92 L1511.02,588.35 L1509.10,593.68 L1503.00,604.70 L1496.07,617.45 L1495.19,621.55 L1502.17,629.47 L1506.35,629.10 L1519.87,623.82 L1531.56,619.15 L1537.09,617.91 L1544.21,628.78 L1540.87,633.36 L1531.91,642.21 L1521.67,652.49 L1519.67,656.18 L1524.14,665.74 L1528.25,666.57 L1542.71,665.31 L1555.24,664.12 L1560.90,664.49 L1564.67,676.93 L1560.17,680.38 L1549.09,686.35 L1536.36,693.33 L1533.40,696.31Z M1362.00,724.00 a25.00,25.00 0 1,0 50.00,0 a25.00,25.00 0 1,0 -50.00,0Z" fill="#a29b8a" fill-rule="evenodd"/>
<circle cx="793" cy="260" r="6" fill="none" stroke="#8db5c3" stroke-width="1.7" opacity="0.75"/>
<circle cx="900" cy="288" r="6" fill="none" stroke="#8db5c3" stroke-width="1.7" opacity="0.75"/>
<circle cx="988" cy="352" r="6" fill="none" stroke="#8db5c3" stroke-width="1.7" opacity="0.75"/>
<circle cx="1072" cy="438" r="6" fill="none" stroke="#8db5c3" stroke-width="1.7" opacity="0.75"/>
<circle cx="450" cy="335" r="6" fill="none" stroke="#8db5c3" stroke-width="1.7" opacity="0.75"/>
<circle cx="362" cy="420" r="6" fill="none" stroke="#8db5c3" stroke-width="1.7" opacity="0.75"/>
<circle cx="300" cy="507" r="6" fill="none" stroke="#8db5c3" stroke-width="1.7" opacity="0.75"/>
<circle cx="268" cy="613" r="6" fill="none" stroke="#8db5c3" stroke-width="1.7" opacity="0.75"/>
<line x1="45.7" y1="145" x2="45.7" y2="764" stroke="#000" stroke-opacity="0.045" stroke-width="1"/>
<line x1="96.8" y1="145" x2="96.8" y2="764" stroke="#000" stroke-opacity="0.045" stroke-width="1"/>
<line x1="147.9" y1="145" x2="147.9" y2="764" stroke="#000" stroke-opacity="0.045" stroke-width="1"/>
<line x1="199.0" y1="145" x2="199.0" y2="764" stroke="#000" stroke-opacity="0.060" stroke-width="1"/>
<line x1="250.1" y1="145" x2="250.1" y2="764" stroke="#000" stroke-opacity="0.045" stroke-width="1"/>
<line x1="301.2" y1="145" x2="301.2" y2="764" stroke="#000" stroke-opacity="0.045" stroke-width="1"/>
<line x1="352.3" y1="145" x2="352.3" y2="764" stroke="#000" stroke-opacity="0.045" stroke-width="1"/>
<line x1="403.4" y1="145" x2="403.4" y2="764" stroke="#000" stroke-opacity="0.045" stroke-width="1"/>
<line x1="454.5" y1="145" x2="454.5" y2="764" stroke="#000" stroke-opacity="0.060" stroke-width="1"/>
<line x1="505.6" y1="145" x2="505.6" y2="764" stroke="#000" stroke-opacity="0.045" stroke-width="1"/>
<line x1="556.7" y1="145" x2="556.7" y2="764" stroke="#000" stroke-opacity="0.045" stroke-width="1"/>
<line x1="607.8" y1="145" x2="607.8" y2="764" stroke="#000" stroke-opacity="0.045" stroke-width="1"/>
<line x1="658.9" y1="145" x2="658.9" y2="764" stroke="#000" stroke-opacity="0.045" stroke-width="1"/>
<line x1="710.0" y1="145" x2="710.0" y2="764" stroke="#000" stroke-opacity="0.060" stroke-width="1"/>
<line x1="761.1" y1="145" x2="761.1" y2="764" stroke="#000" stroke-opacity="0.045" stroke-width="1"/>
<line x1="812.2" y1="145" x2="812.2" y2="764" stroke="#000" stroke-opacity="0.045" stroke-width="1"/>
<line x1="863.3" y1="145" x2="863.3" y2="764" stroke="#000" stroke-opacity="0.045" stroke-width="1"/>
<line x1="914.4" y1="145" x2="914.4" y2="764" stroke="#000" stroke-opacity="0.045" stroke-width="1"/>
<line x1="965.5" y1="145" x2="965.5" y2="764" stroke="#000" stroke-opacity="0.060" stroke-width="1"/>
<line x1="1016.6" y1="145" x2="1016.6" y2="764" stroke="#000" stroke-opacity="0.045" stroke-width="1"/>
<line x1="1067.7" y1="145" x2="1067.7" y2="764" stroke="#000" stroke-opacity="0.045" stroke-width="1"/>
<line x1="1118.8" y1="145" x2="1118.8" y2="764" stroke="#000" stroke-opacity="0.045" stroke-width="1"/>
<line x1="1169.9" y1="145" x2="1169.9" y2="764" stroke="#000" stroke-opacity="0.045" stroke-width="1"/>
<line x1="1221.0" y1="145" x2="1221.0" y2="764" stroke="#000" stroke-opacity="0.060" stroke-width="1"/>
<line x1="1272.1" y1="145" x2="1272.1" y2="764" stroke="#000" stroke-opacity="0.045" stroke-width="1"/>
<line x1="1323.2" y1="145" x2="1323.2" y2="764" stroke="#000" stroke-opacity="0.045" stroke-width="1"/>
<line x1="1374.3" y1="145" x2="1374.3" y2="764" stroke="#000" stroke-opacity="0.045" stroke-width="1"/>
<line x1="1425.4" y1="145" x2="1425.4" y2="764" stroke="#000" stroke-opacity="0.045" stroke-width="1"/>
<line x1="1476.5" y1="145" x2="1476.5" y2="764" stroke="#000" stroke-opacity="0.060" stroke-width="1"/>
<line x1="1527.6" y1="145" x2="1527.6" y2="764" stroke="#000" stroke-opacity="0.045" stroke-width="1"/>
<line x1="1578.7" y1="145" x2="1578.7" y2="764" stroke="#000" stroke-opacity="0.045" stroke-width="1"/>
<line x1="0" y1="187.0" x2="1600" y2="187.0" stroke="#000" stroke-opacity="0.170" stroke-width="1"/>
<line x1="0" y1="238.1" x2="1600" y2="238.1" stroke="#000" stroke-opacity="0.045" stroke-width="1"/>
<line x1="0" y1="289.2" x2="1600" y2="289.2" stroke="#000" stroke-opacity="0.045" stroke-width="1"/>
<line x1="0" y1="340.3" x2="1600" y2="340.3" stroke="#000" stroke-opacity="0.045" stroke-width="1"/>
<line x1="0" y1="391.4" x2="1600" y2="391.4" stroke="#000" stroke-opacity="0.045" stroke-width="1"/>
<line x1="0" y1="442.5" x2="1600" y2="442.5" stroke="#000" stroke-opacity="0.060" stroke-width="1"/>
<line x1="0" y1="493.6" x2="1600" y2="493.6" stroke="#000" stroke-opacity="0.045" stroke-width="1"/>
<line x1="0" y1="544.7" x2="1600" y2="544.7" stroke="#000" stroke-opacity="0.045" stroke-width="1"/>
<line x1="0" y1="595.8" x2="1600" y2="595.8" stroke="#000" stroke-opacity="0.045" stroke-width="1"/>
<line x1="0" y1="646.9" x2="1600" y2="646.9" stroke="#000" stroke-opacity="0.045" stroke-width="1"/>
<line x1="0" y1="698.0" x2="1600" y2="698.0" stroke="#000" stroke-opacity="0.060" stroke-width="1"/>
<line x1="0" y1="749.1" x2="1600" y2="749.1" stroke="#000" stroke-opacity="0.045" stroke-width="1"/>
<line x1="709.5" y1="145" x2="709.5" y2="764" stroke="#3fae5a" stroke-width="1.8" stroke-opacity="0.45"/>
<line x1="0" y1="698.5" x2="1600" y2="698.5" stroke="#a83a3a" stroke-width="1.5" stroke-opacity="0.5"/>
<rect x="712" y="416" width="21" height="23.5" fill="#edf6fb" fill-opacity="0.92"/>
<rect x="434" y="700" width="19" height="22" fill="#edf6fb" fill-opacity="0.6"/>
<text transform="translate(727.95,439.60) rotate(-90)" font-family="Liberation Sans" font-size="18.5" fill="#333">50</text>
<text transform="translate(449.65,728.95) rotate(-90)" font-family="Liberation Sans" font-size="18.5" fill="#333">-50</text>
<circle cx="709.5" cy="698" r="13" fill="url(#omark)"/>
<circle cx="709.5" cy="698" r="4.6" fill="none" stroke="#5d7e52" stroke-width="2"/>
<circle cx="709.5" cy="698" r="3.2" fill="#f4f4f4"/>
</svg>
<div class="a" style="left:0;top:0;width:1600px;height:1px;background:#f2f2f2"></div>
<div class="a" style="left:0;top:1px;width:1600px;height:1px;background:#b0b0b0"></div><div class="a" style="left:0;top:2px;width:1600px;height:1px;background:#c8c8c8"></div>
<div class="a" style="left:0;top:3px;width:1600px;height:37px;background:#d9d9d9"></div>
<div class="a" style="left:268px;top:6px;width:1062px;height:39px;background:#f4f4f4"></div>
<div class="a" style="left:0;top:40px;width:1600px;height:105px;background:#f4f4f4"></div>
<div class="a" style="left:3px;top:54px;width:134px;height:74px;border:1px solid #c8c8c8;border-radius:4px;background:#f4f4f4"></div>
<div class="a" style="left:0;top:764px;width:1600px;height:50px;background:#f4f4f4"></div>
<div class="a" style="left:0;top:150px;width:360px;height:29px;background:#f4f4f4;border-right:1px solid #dcdcdc;border-bottom:1px solid #dcdcdc"></div>
<div class="a" style="left:0;top:728px;width:360px;height:29px;background:#f4f4f4;border-right:1px solid #dcdcdc;border-bottom:1px solid #dcdcdc"></div>
<div class="a" style="left:1307px;top:254px;width:293px;height:473px;background:#f3f3f3;border-left:1px solid #dedede;border-top:1px solid #dedede;border-bottom:1px solid #d8d8d8;box-shadow:-2px 1px 4px rgba(0,0,0,0.08)"></div>
<svg class="a" style="left:0px;top:0px;" width="270" height="40" viewBox="0 0 270 40"><rect x="0.5" y="13.0" width="4" height="4" fill="#7a7a7a"/><rect x="0.5" y="18.0" width="4" height="4" fill="#7a7a7a"/><rect x="0.5" y="23.0" width="4" height="4" fill="#7a7a7a"/><rect x="5.5" y="13.0" width="4" height="4" fill="#7a7a7a"/><rect x="5.5" y="18.0" width="4" height="4" fill="#7a7a7a"/><rect x="5.5" y="23.0" width="4" height="4" fill="#7a7a7a"/><rect x="10.5" y="13.0" width="4" height="4" fill="#7a7a7a"/><rect x="10.5" y="18.0" width="4" height="4" fill="#7a7a7a"/><rect x="10.5" y="23.0" width="4" height="4" fill="#7a7a7a"/><path d="M39,12 H49 L53,16 V29 H39 Z" fill="#7a7a7a"/><path d="M49,12 V16 H53" fill="#bdbdbd" stroke="#d9d9d9" stroke-width="0.8"/><path d="M60,17 H69.5 L64.75,23 Z" fill="#7a7a7a"/><path d="M89,13 H101 L104,16 V28 H89 Z" fill="#7a7a7a"/><rect x="92" y="14" width="8" height="5" fill="#d9d9d9"/><rect x="93.5" y="14.5" width="3" height="3.5" fill="#7a7a7a"/><rect x="92" y="22" width="9" height="5" fill="#d9d9d9"/><path d="M142.5,25 C142.5,19 137,17.5 133,18.5" fill="none" stroke="#7a7a7a" stroke-width="2.2"/><path d="M130,19 L135,15 L135.5,23 Z" fill="#7a7a7a"/><path d="M152,17 H161 L156.5,22.5 Z" fill="#7a7a7a"/><path d="M177.5,25 C177.5,19 183,17.5 187,18.5" fill="none" stroke="#a3a3a3" stroke-width="2.2"/><path d="M190,19 L185,15 L184.5,23 Z" fill="#a3a3a3"/><path d="M197,17 H207 L202,22.5 Z" fill="#a3a3a3"/><path d="M238.5,17 L248,25.5 L246,25.5 V32.5 H240.8 V28 H236.5 V32.5 H231 V25.5 H229 Z" fill="#7a7a7a"/><rect x="242.5" y="18.5" width="2.5" height="4" fill="#7a7a7a"/></svg>
<svg class="a" style="left:744px;top:13px;" width="20" height="20" viewBox="744 13 20 20"><path d="M754,14.5 L762,18.5 V27.5 L754,31.5 L746,27.5 V18.5 Z" fill="#f08a2a"/><path d="M746,18.5 L754,22.5 L762,18.5 L754,14.5 Z" fill="#f7b267"/><path d="M754,22.5 V31.5 L762,27.5 V18.5 Z" fill="#d96a12"/></svg>
<svg class="a" style="left:1300px;top:0px;" width="300" height="40" viewBox="1300 0 300 40"><path d="M1311,18 L1321.5,29 M1321.5,18 L1311,29" stroke="#6e6e6e" stroke-width="1.8"/><path d="M1363,15 V31 M1355,23 H1371" stroke="#7a7a7a" stroke-width="3"/><circle cx="1414" cy="21" r="7.5" fill="none" stroke="#7a7a7a" stroke-width="2.5"/><path d="M1414,21 L1419,16" stroke="#7a7a7a" stroke-width="2.5"/><rect x="1406" y="13" width="5" height="5" fill="#d9d9d9"/><circle cx="1455" cy="21" r="8" fill="none" stroke="#7a7a7a" stroke-width="1.6"/><circle cx="1455" cy="21" r="5.5" fill="#7a7a7a"/><path d="M1455,17.5 V21.5 H1458" stroke="#d9d9d9" stroke-width="1.3" fill="none"/><path d="M1495.5,14 C1491,14 1489.5,18 1489.5,22 L1488,26.5 H1503 L1501.5,22 C1501.5,18 1500,14 1495.5,14 Z" fill="#7a7a7a"/><rect x="1493" y="27.5" width="5" height="2.5" rx="1" fill="#7a7a7a"/><circle cx="1499.5" cy="16" r="3.2" fill="#f07b3c"/><circle cx="1536.5" cy="20.5" r="8.5" fill="#7a7a7a"/><text x="1536.5" y="25" font-family="Liberation Sans" font-weight="bold" font-size="12.5" fill="#e0e0e0" text-anchor="middle">?</text><circle cx="1587" cy="21" r="14.5" fill="#a9bfd6"/><path d="M1587,8.5 C1580.5,8.5 1579,14 1580,20 C1580.5,24 1582,26 1583.5,27 L1583.5,29 C1579,30 1575,31.5 1574.5,33 A14.5,14.5 0 0,0 1599.5,33 C1599,31.5 1595,30 1590.5,29 L1590.5,27 C1592,26 1593.5,24 1594,20 C1595,14 1593.5,8.5 1587,8.5 Z" fill="#4f6684"/></svg>
<svg class="a" style="left:0px;top:40px;" width="1600" height="105" viewBox="0 40 1600 105"><path d="M96.5,88 H103.5 L100,92.5 Z" fill="#5a5a5a"/><path d="M329.0,125.5 H336.0 L332.5,130 Z" fill="#7a7a7a"/><path d="M610.0,125.5 H617.0 L613.5,130 Z" fill="#7a7a7a"/><path d="M884.0,125.5 H891.0 L887.5,130 Z" fill="#7a7a7a"/><path d="M1078.0,125.5 H1085.0 L1081.5,130 Z" fill="#7a7a7a"/><path d="M1183.0,125.5 H1190.0 L1186.5,130 Z" fill="#7a7a7a"/><path d="M1287.0,125.5 H1294.0 L1290.5,130 Z" fill="#7a7a7a"/><path d="M1396.0,125.5 H1403.0 L1399.5,130 Z" fill="#7a7a7a"/><path d="M1550.0,125.5 H1557.0 L1553.5,130 Z" fill="#7a7a7a"/><line x1="471.5" y1="73" x2="471.5" y2="136" stroke="#cfcfcf" stroke-width="1"/><line x1="696.5" y1="73" x2="696.5" y2="136" stroke="#cfcfcf" stroke-width="1"/><line x1="973.5" y1="73" x2="973.5" y2="136" stroke="#cfcfcf" stroke-width="1"/><line x1="1101.5" y1="73" x2="1101.5" y2="136" stroke="#cfcfcf" stroke-width="1"/><line x1="1204.5" y1="73" x2="1204.5" y2="136" stroke="#cfcfcf" stroke-width="1"/><line x1="1323.5" y1="73" x2="1323.5" y2="136" stroke="#cfcfcf" stroke-width="1"/><rect x="982" y="66" width="82" height="3" fill="#333"/><path d="M158,102.3 H182.3" stroke="#555" stroke-width="1.2"/><path d="M182.3,84.3 A9,9 0 0,1 182.3,102.3" fill="none" stroke="#555" stroke-width="1.4"/><rect x="156.0" y="100.3" width="4" height="4" fill="#1a8ad6"/><rect x="180.3" y="100.3" width="4" height="4" fill="#1a8ad6"/><rect x="180.3" y="82.3" width="4" height="4" fill="#1a8ad6"/><rect x="210.5" y="80.5" width="34.5" height="24" fill="none" stroke="#555" stroke-width="1.4"/><rect x="208.5" y="78.5" width="4" height="4" fill="#1a8ad6"/><rect x="243" y="102.5" width="4.5" height="4.5" fill="#1a8ad6"/><circle cx="280.2" cy="92.6" r="18.3" fill="none" stroke="#555" stroke-width="1.5"/><path d="M270,102.8 L290.4,82.4" stroke="#1a8ad6" stroke-width="1.6"/><path d="M268.5,104.3 L269.5,98 L274.8,103.3 Z M291.9,80.9 L285.6,81.9 L290.9,87.2 Z" fill="#1a8ad6"/><rect x="278.2" y="90.6" width="4" height="4" fill="#1a8ad6"/><path d="M315.8,110.6 C315,100 318,88 323.5,86.3 C330,84.5 337,99 344,99.7 C350,100 352,86 352,75.5" fill="none" stroke="#555" stroke-width="1.3"/><rect x="313.8" y="108.6" width="4" height="4" fill="#1a8ad6"/><rect x="321.5" y="84.3" width="4" height="4" fill="#1a8ad6"/><rect x="342.0" y="97.7" width="4" height="4" fill="#1a8ad6"/><rect x="350.0" y="73.5" width="4" height="4" fill="#1a8ad6"/><path d="M368.5,110.8 L385.2,77 V110.8 Z" fill="none" stroke="#555" stroke-width="1.4"/><path d="M388.5,110.8 V77 L405.2,110.8 Z" fill="none" stroke="#1a8ad6" stroke-width="1.4"/><path d="M420.3,76 V111 M458.6,76 V111" stroke="#555" stroke-width="1.3"/><path d="M423,86.5 H456" stroke="#1a8ad6" stroke-width="1.4"/><path d="M421.5,86.5 L427,83 V90 Z M457.5,86.5 L452,83 V90 Z" fill="#1a8ad6"/><path d="M486.5,96.5 C487,83 497,74 510,74" fill="none" stroke="#1a8ad6" stroke-width="1.5"/><path d="M486.5,97 V112.5" stroke="#555" stroke-width="1.3"/><path d="M511,74 H526" stroke="#555" stroke-width="1.3"/><path d="M538,76.5 H556" stroke="#1a8ad6" stroke-width="1.2" stroke-dasharray="3,2"/><path d="M568,76.5 H579" stroke="#555" stroke-width="1.3"/><path d="M561.5,74 L566,74 L567.5,98 L563,99 Z" fill="#222"/><path d="M549,81 L552,79.5 L565,96 L562,98 Z" fill="#222"/><circle cx="563.5" cy="97" r="1.4" fill="#eee"/><ellipse cx="560.5" cy="106" rx="3.9" ry="5.6" fill="none" stroke="#222" stroke-width="2.6"/><ellipse cx="571" cy="104" rx="4.6" ry="4.4" fill="none" stroke="#222" stroke-width="2.6"/><path d="M632,78.5 H604 C596,78.5 592,85 592,93 C592,101 596,107.5 604,107.5 H632" fill="none" stroke="#1a8ad6" stroke-width="1.5"/><path d="M631,84.5 H606 C601,84.5 599,88.5 599,93 C599,97.5 601,101.5 606,101.5 H631" fill="none" stroke="#555" stroke-width="1.3"/><path d="M645,112.5 C645.5,108 646,103 647,98" fill="none" stroke="#555" stroke-width="1.3"/><path d="M647,98 C651,84 656,86 662,94 C668,102 674,106 680,99 C683,94 683.5,86 684,79" fill="none" stroke="#1a8ad6" stroke-width="1.5"/><path d="M684,79 L684.5,73" stroke="#555" stroke-width="1.3"/><path d="M714,79.5 V110 M711,79.5 H717 M711,110 H717" stroke="#1a8ad6" stroke-width="1.6"/><path d="M721.5,80.5 V108.5 H749" fill="none" stroke="#555" stroke-width="1.2"/><rect x="720" y="79" width="3" height="3" fill="#555"/><rect x="747.5" y="107" width="3" height="3" fill="#555"/><path d="M727,87 V101.5 H743 C743,93 736,87 727,87 Z" fill="none" stroke="#555" stroke-width="1.1"/><rect x="726" y="86" width="2.5" height="2.5" fill="#555"/><rect x="741.5" y="100.5" width="2.5" height="2.5" fill="#555"/><path d="M742,74 L732,84 L739,84 L736,92 L750,81 L742,81 L746,74 Z" fill="#f5a30c"/><path d="M784.5,76 V100 M788.5,75 V100" stroke="#555" stroke-width="1.2"/><path d="M772,101.5 H795" stroke="#555" stroke-width="1.2"/><path d="M773,104.5 H795" stroke="#d0202a" stroke-width="1.6"/><path d="M775,110 L779,104.5 M780,110 L784,104.5 M785,110 L789,104.5 M790,110 L794,104.5" stroke="#d0202a" stroke-width="1.4"/><path d="M781,77 V98" stroke="#d0202a" stroke-width="1.3"/><path d="M776,79 L781,84 M776,84 L781,89 M776,89 L781,94 M776,94 L781,99" stroke="#d0202a" stroke-width="1.3"/><path d="M818.5,74 V110" stroke="#d0202a" stroke-width="1.2"/><rect x="816.5" y="109" width="3.5" height="3.5" fill="#d0202a"/><path d="M821,111 H856" stroke="#555" stroke-width="1.2"/><circle cx="884" cy="97.5" r="14.3" fill="none" stroke="#d0202a" stroke-width="1.3"/><path d="M883,74 L907.5,99" stroke="#555" stroke-width="1.2"/><rect x="929" y="85" width="24.5" height="4.5" fill="#d0202a"/><rect x="929" y="97" width="24.5" height="4.5" fill="#6e6e6e"/><path d="M992,81 L999,73.5 H1027 V101 L1020,108 H992 Z" fill="#d9d9d9" stroke="#8a8a8a" stroke-width="0.8"/><path d="M1020,81 L1027,73.5 V101 L1020,108 Z" fill="#c2c2c2"/><path d="M992,81 H1020 V108" fill="none" stroke="#bdbdbd" stroke-width="0.6"/><path d="M1014,101.5 H1031 M1014,110 H1031" stroke="#6a6a6a" stroke-width="1.6"/><rect x="1018" y="97" width="2.5" height="8" fill="#1a8ad6"/><rect x="1024.5" y="106" width="2.5" height="7" fill="#6a6a6a"/><rect x="1045.5" y="74.5" width="36" height="35" fill="#f4f4f4" stroke="#666" stroke-width="1.2"/><rect x="1045" y="74" width="37" height="6" fill="#666"/><rect x="1047" y="75.5" width="4" height="2.5" fill="#fff"/><path d="M1049,85.5 H1079 V103 H1049 Z M1049,91.5 H1079 M1049,97.5 H1068 M1055,85.5 V103 M1061,85.5 V103" fill="none" stroke="#666" stroke-width="1.2"/><rect x="1064" y="99" width="20" height="14" fill="#f4f4f4"/><path d="M1067,101.5 H1084 M1067,110 H1084" stroke="#6a6a6a" stroke-width="1.6"/><rect x="1071" y="97" width="2.5" height="8" fill="#1a8ad6"/><rect x="1077.5" y="106" width="2.5" height="7" fill="#6a6a6a"/><path d="M1137.5,83 V95 M1171,83 V95" stroke="#666" stroke-width="1.1"/><path d="M1140,88.5 H1168" stroke="#666" stroke-width="1.3"/><path d="M1139,88.5 L1143.5,85.5 V91.5 Z M1169.5,88.5 L1165,85.5 V91.5 Z" fill="#666"/><rect x="1137" y="96" width="34.5" height="6.8" fill="#f5a30c"/><path d="M1141,96 V98.5 M1145,96 V98.5 M1149,96 V98.5 M1153,96 V99.5 M1157,96 V98.5 M1161,96 V98.5 M1165,96 V98.5" stroke="#c57a00" stroke-width="0.7"/><rect x="1222" y="75.5" width="29" height="8" rx="1.5" fill="#3ea3e0"/><rect x="1228" y="83.5" width="15" height="29" fill="#3ea3e0"/><path d="M1228,86.5 H1243" stroke="#9ed2f2" stroke-width="0.8"/><path d="M1228,89.5 H1243" stroke="#9ed2f2" stroke-width="0.8"/><path d="M1228,92.5 H1243" stroke="#9ed2f2" stroke-width="0.8"/><path d="M1228,95.5 H1243" stroke="#9ed2f2" stroke-width="0.8"/><path d="M1228,98.5 H1243" stroke="#9ed2f2" stroke-width="0.8"/><path d="M1228,101.5 H1243" stroke="#9ed2f2" stroke-width="0.8"/><path d="M1228,104.5 H1243" stroke="#9ed2f2" stroke-width="0.8"/><path d="M1228,107.5 H1243" stroke="#9ed2f2" stroke-width="0.8"/><path d="M1228,110.5 H1243" stroke="#9ed2f2" stroke-width="0.8"/><path d="M1243,77 H1251" stroke="#8cc9ee" stroke-width="1"/><path d="M1249.5,95.5 V112.5 M1241,104 H1258" stroke="#2f9e3a" stroke-width="4.2"/><rect x="1273" y="75" width="36" height="35" fill="#5bbcef"/><path d="M1273,98 C1278,88 1283,85 1288,92 C1292,98 1295,99 1299,95 C1303,91 1306,94 1309,98 V110 H1273 Z" fill="#1a84c7"/><circle cx="1299" cy="83.5" r="3.5" fill="#f7f0b5"/><rect x="1349.5" y="69.5" width="47" height="46" fill="#d7eaf6" stroke="#9ccbe6" stroke-width="1"/><rect x="1353.5" y="74" width="34" height="25" fill="none" stroke="#3cb46a" stroke-width="1.5" stroke-dasharray="4,2.5"/><path d="M1380,92 V108 L1384,104.5 L1387,111 L1389.5,110 L1386.5,103.5 L1391.5,103.5 Z" fill="#fff" stroke="#333" stroke-width="1.1"/><circle cx="1498.3" cy="93" r="19" fill="#22b12c"/><path d="M1488.5,93.5 L1495.5,100 L1508,87.5" fill="none" stroke="#fff" stroke-width="4.5" stroke-linecap="round" stroke-linejoin="round"/></svg>
<div class="a" style="left:37px;top:187px;width:31px;height:24px;background:#f6f6f6"></div>
<div class="a" style="left:68px;top:187px;width:125px;height:24px;background:#d9d9d9"></div>
<div class="a" style="left:193px;top:187px;width:31px;height:24px;background:#f3f3f3"></div>
<div class="a" style="left:58px;top:216.5px;width:185px;height:24px;background:#f3f3f3"></div>
<div class="a" style="left:58px;top:246px;width:145px;height:24px;background:#f3f3f3"></div>
<div class="a" style="left:58px;top:275.5px;width:127px;height:24px;background:#f3f3f3"></div>
<div class="a" style="left:58px;top:305px;width:147px;height:24px;background:#f3f3f3"></div>
<div class="a" style="left:58px;top:334.5px;width:232px;height:24px;background:#f3f3f3"></div>
<div class="a" style="left:58px;top:364px;width:232px;height:24px;background:#f3f3f3"></div>
<div class="a" style="left:58px;top:393.5px;width:259px;height:24px;background:#f3f3f3"></div>
<svg class="a" style="left:0px;top:150px;" width="360" height="270" viewBox="0 150 360 270"><path d="M1,165 L5,162 V168 Z M6,165 L10,162 V168 Z" fill="#9a9a9a"/><rect x="335" y="163.5" width="10" height="2.5" fill="#777"/><path d="M15,195.5 L19.5,200 L24,195.5" fill="none" stroke="#444" stroke-width="1.5"/><path d="M40,224.0 L44.5,228.5 L40,233.0" fill="none" stroke="#555" stroke-width="1.4"/><path d="M40,253.5 L44.5,258.0 L40,262.5" fill="none" stroke="#555" stroke-width="1.4"/><path d="M40,283.0 L44.5,287.5 L40,292.0" fill="none" stroke="#555" stroke-width="1.4"/><path d="M40,312.5 L44.5,317.0 L40,321.5" fill="none" stroke="#555" stroke-width="1.4"/><path d="M40,342.0 L44.5,346.5 L40,351.0" fill="none" stroke="#555" stroke-width="1.4"/><path d="M40,371.5 L44.5,376.0 L40,380.5" fill="none" stroke="#555" stroke-width="1.4"/><path d="M40,401.0 L44.5,405.5 L40,410.0" fill="none" stroke="#555" stroke-width="1.4"/><path d="M40.0,199.0 C45.0,192.0 55.0,192.0 60.0,199.0 C55.0,206.0 45.0,206.0 40.0,199.0 Z" fill="#6e6e6e"/><circle cx="50.0" cy="199.0" r="3" fill="#f0f0f0"/><circle cx="50.0" cy="199.0" r="1.6" fill="#6e6e6e"/><rect x="72.5" y="190" width="7" height="10.5" fill="#3ea3e0"/><rect x="72.5" y="200.5" width="7" height="7" fill="#f4f4f4" stroke="#777" stroke-width="0.9"/><rect x="79.5" y="200.5" width="8" height="7" fill="#f4f4f4" stroke="#777" stroke-width="0.9"/><circle cx="206" cy="198.5" r="7.5" fill="#e6e6e6" stroke="#9a9a9a" stroke-width="1"/><circle cx="206" cy="198.5" r="3" fill="#444"/><polygon points="81.81,226.55 82.00,228.50 79.06,229.90 78.65,231.26 80.31,234.06 79.07,235.57 76.00,234.49 74.76,235.15 73.95,238.31 72.00,238.50 70.60,235.56 69.24,235.15 66.44,236.81 64.93,235.57 66.01,232.50 65.35,231.26 62.19,230.45 62.00,228.50 64.94,227.10 65.35,225.74 63.69,222.94 64.93,221.43 68.00,222.51 69.24,221.85 70.05,218.69 72.00,218.50 73.40,221.44 74.76,221.85 77.56,220.19 79.07,221.43 77.99,224.50 78.65,225.74" fill="#7a7a7a"/><circle cx="72.0" cy="228.5" r="3.5" fill="#f0f0f0"/><path d="M62.5,250.5 V265.5 H80.5 V253.5 H70.5 L69.5,250.5 H62.5 Z" fill="none" stroke="#6e6e6e" stroke-width="1"/><path d="M62.5,253.5 H70.5" stroke="#6e6e6e" stroke-width="1"/><path d="M62,287.5 C66,281 78,281 82,287.5 C78,294 66,294 62,287.5 Z" fill="none" stroke="#8a8a8a" stroke-width="1.3"/><circle cx="72" cy="287.5" r="3" fill="none" stroke="#8a8a8a" stroke-width="1.3"/><path d="M64,280 L80,295" stroke="#8a8a8a" stroke-width="1.3"/><path d="M93.5,280.0 V295.0 H111.5 V283.0 H101.5 L100.5,280.0 H93.5 Z" fill="none" stroke="#6e6e6e" stroke-width="1"/><path d="M93.5,283.0 H101.5" stroke="#6e6e6e" stroke-width="1"/><path d="M62.0,317.0 C67.0,310.0 77.0,310.0 82.0,317.0 C77.0,324.0 67.0,324.0 62.0,317.0 Z" fill="#6e6e6e"/><circle cx="72.0" cy="317.0" r="3" fill="#f0f0f0"/><circle cx="72.0" cy="317.0" r="1.6" fill="#6e6e6e"/><path d="M93.5,309.5 V324.5 H111.5 V312.5 H101.5 L100.5,309.5 H93.5 Z" fill="none" stroke="#6e6e6e" stroke-width="1"/><path d="M93.5,312.5 H101.5" stroke="#6e6e6e" stroke-width="1"/><path d="M62.0,346.5 C67.0,339.5 77.0,339.5 82.0,346.5 C77.0,353.5 67.0,353.5 62.0,346.5 Z" fill="#6e6e6e"/><circle cx="72.0" cy="346.5" r="3" fill="#f0f0f0"/><circle cx="72.0" cy="346.5" r="1.6" fill="#6e6e6e"/><path d="M62.0,376.0 C67.0,369.0 77.0,369.0 82.0,376.0 C77.0,383.0 67.0,383.0 62.0,376.0 Z" fill="#6e6e6e"/><circle cx="72.0" cy="376.0" r="3" fill="#f0f0f0"/><circle cx="72.0" cy="376.0" r="1.6" fill="#6e6e6e"/><path d="M62.0,405.5 C67.0,398.5 77.0,398.5 82.0,405.5 C77.0,412.5 67.0,412.5 62.0,405.5 Z" fill="#6e6e6e"/><circle cx="72.0" cy="405.5" r="3" fill="#f0f0f0"/><circle cx="72.0" cy="405.5" r="1.6" fill="#6e6e6e"/><path d="M96.5,342.5 L100.5,338.5 H112.5 V351 L108.5,355 H96.5 Z" fill="#e4e4e4" stroke="#666" stroke-width="0.9"/><path d="M108.5,342.5 L112.5,338.5 V351 L108.5,355 Z" fill="#bdbdbd"/><path d="M96.5,342.5 H108.5 V355" fill="none" stroke="#777" stroke-width="0.6"/><rect x="94" y="337" width="9" height="9" fill="#f1f1f1" opacity="0.9"/><circle cx="98.5" cy="336.5" r="1.3" fill="none" stroke="#333" stroke-width="1"/><path d="M98.5,338 V345.5 M96,339.8 H101 M94.8,342.5 C95,345.5 102,345.5 102.2,342.5" fill="none" stroke="#333" stroke-width="1.1"/><path d="M94.5,371.5 L98.5,367.5 H111.5 V380.5 L107.5,384.5 H94.5 Z" fill="#2f9ee6"/><path d="M107.5,371.5 L111.5,367.5 V380.5 L107.5,384.5 Z" fill="#1b7fc4"/><path d="M94.5,371.5 L98.5,367.5 H111.5 L107.5,371.5 Z" fill="#66c0f2"/><path d="M94.5,401.0 L98.5,397.0 H111.5 V410.0 L107.5,414.0 H94.5 Z" fill="#2f9ee6"/><path d="M107.5,401.0 L111.5,397.0 V410.0 L107.5,414.0 Z" fill="#1b7fc4"/><path d="M94.5,401.0 L98.5,397.0 H111.5 L107.5,401.0 Z" fill="#66c0f2"/></svg>
<svg class="a" style="left:330px;top:735px;" width="20" height="20" viewBox="330 735 20 20"><path d="M340,737.5 V748.5 M334.5,743 H345.5" stroke="#666" stroke-width="1.8"/></svg>
<div class="a" style="left:1307px;top:282px;width:293px;height:1px;background:#dcdcdc"></div>
<div class="a" style="left:1308px;top:681.5px;width:292px;height:1px;background:#dedede"></div>
<svg class="a" style="left:1307px;top:254px;" width="293" height="473" viewBox="1307 254 293 473"><rect x="1321.5" y="268" width="10" height="2" fill="#666"/><path d="M1596,265 L1600,269 L1596,273 Z" fill="#888"/><path d="M1319.5,299.5 H1330.5 L1325,306.5 Z" fill="#6a6a6a"/><path d="M1515.5,341.7 H1537" stroke="#c8203a" stroke-width="1.3" stroke-dasharray="2.6,1.6"/><path d="M1521,339.3 L1535,331.5 M1521.5,344.2 L1535,350.5" stroke="#555" stroke-width="1.1"/><path d="M1528.5,331 L1531,335.5 M1528.5,351.5 L1531,347.5 M1531.5,337.5 V346.5" stroke="#c8203a" stroke-width="1.3"/><path d="M1569,334.5 C1566,331 1555,330.5 1554,340.5 C1553.5,350 1565,351 1568.5,347 V345.5 H1571 V336 H1569 Z" fill="none" stroke="#c4c4c4" stroke-width="1.3"/><path d="M1552,340.5 H1573" stroke="#e6a0a8" stroke-width="0.9"/><path d="M1518.5,376 L1523,369.5 V376 M1523,373 L1530,371.5 V376" fill="#9a9a9a" stroke="#666" stroke-width="0.9"/><rect x="1518.5" y="376.5" width="16.5" height="10.5" fill="#f4f4f4" stroke="#555" stroke-width="1"/><rect x="1520.5" y="378.5" width="12.5" height="6.5" fill="#3ea3e0"/><rect x="1519" y="410.2" width="14.5" height="14.5" fill="#7b7b7b"/><path d="M1522.5,418.0 L1525.3,420.8 L1530,414.5" fill="none" stroke="#fff" stroke-width="1.8"/><rect x="1519" y="448.2" width="14.5" height="14.5" fill="#7b7b7b"/><path d="M1522.5,456.0 L1525.3,458.8 L1530,452.5" fill="none" stroke="#fff" stroke-width="1.8"/><rect x="1519.5" y="486.8" width="13.5" height="13.5" fill="#fff" stroke="#9a9a9a" stroke-width="1"/><rect x="1519" y="524.2" width="14.5" height="14.5" fill="#7b7b7b"/><path d="M1522.5,532.0 L1525.3,534.8 L1530,528.5" fill="none" stroke="#fff" stroke-width="1.8"/><rect x="1519" y="562.2" width="14.5" height="14.5" fill="#7b7b7b"/><path d="M1522.5,570.0 L1525.3,572.8 L1530,566.5" fill="none" stroke="#fff" stroke-width="1.8"/><rect x="1519" y="600.2" width="14.5" height="14.5" fill="#7b7b7b"/><path d="M1522.5,608.0 L1525.3,610.8 L1530,604.5" fill="none" stroke="#fff" stroke-width="1.8"/><rect x="1519" y="638.2" width="14.5" height="14.5" fill="#7b7b7b"/><path d="M1522.5,646.0 L1525.3,648.8 L1530,642.5" fill="none" stroke="#fff" stroke-width="1.8"/><rect x="1519" y="676" width="14.5" height="6" fill="#7b7b7b"/></svg>
<div class="a" style="left:1307px;top:676px;width:200px;height:6px;overflow:hidden"><span class="t" style="left:16px;top:1px;font-size:14.2px;color:#3a3a3a;transform:scaleX(0.95)">Projected Geometries</span></div>
<div class="a" style="left:1471px;top:690px;width:125px;height:29px;border:1px solid #b9b9b9;background:#f6f6f6;border-radius:2px"></div>
<svg class="a" style="left:1530px;top:160px;" width="70" height="75" viewBox="1530 160 70 75"><rect x="1540.5" y="177" width="45" height="46" fill="#ededef" stroke="#8c8c8c" stroke-width="1"/><rect x="1550" y="188" width="27" height="24" fill="#e6e6ea"/><text x="1563" y="204.5" font-family="Liberation Sans" font-weight="bold" font-size="11" fill="#8a8a8a" text-anchor="middle">TOP</text><text x="1544" y="176" font-family="Liberation Sans" font-size="10" fill="#5cc46a" text-anchor="middle">Y</text><text x="1537.5" y="230" font-family="Liberation Sans" font-size="11" fill="#6b6bd8" text-anchor="middle">Z</text><text x="1593" y="224" font-family="Liberation Sans" font-size="11" fill="#e05a5a" text-anchor="middle">X</text></svg>
<div class="a" style="left:659px;top:727px;width:290px;height:28px;background:rgba(246,246,246,0.95)"></div>
<svg class="a" style="left:655px;top:725px;" width="295" height="32" viewBox="655 725 295 32"><path d="M672.5,731 C666.5,733 665,747 672.5,749.5" fill="none" stroke="#333" stroke-width="1.3"/><path d="M671,729.5 L675,731.5 L671.5,734 Z M671,751 L675,749 L671.5,746.5 Z" fill="#333"/><path d="M663.5,737.5 C660.5,739.5 660.5,743 663.5,744.5" fill="none" stroke="#333" stroke-width="1.3"/><path d="M675.5,737.5 C680.5,738.5 681,743.5 676,745.5 C673,746.5 670,746.5 668,746" fill="none" stroke="#333" stroke-width="1.3"/><circle cx="670.5" cy="740.5" r="1.6" fill="#1a8ad6"/><path d="M687.5,740 H693 L690.25,744 Z" fill="#777"/><path d="M704.5,737 L709.5,731 V737 M709.5,734 L717.5,732.5 V737" fill="#9a9a9a" stroke="#555" stroke-width="0.9"/><rect x="704.5" y="737" width="17" height="12" fill="#f4f4f4" stroke="#555" stroke-width="1"/><rect x="706.8" y="739.3" width="12.4" height="7.4" fill="#3ea3e0"/><path d="M739,750 C735,746 734,742 736,741 C737.5,740.5 739,743 739,743 V734 C739,732 741.5,732 741.5,734 V740 V732.5 C741.5,730.5 744,730.5 744,732.5 V740 V733 C744,731 746.5,731 746.5,733 V741 V735 C746.5,733 749,733 749,735 V744 C749,748 747,750 745,751 Z" fill="none" stroke="#888" stroke-width="1"/><circle cx="772.5" cy="740.5" r="5.5" fill="#d6d6d6" stroke="#555" stroke-width="1.2"/><path d="M776.5,744.5 L781,749" stroke="#555" stroke-width="1.6"/><path d="M781.5,730.5 V735.5 M779,733 H784 M778.5,738 H785" stroke="#555" stroke-width="1"/><circle cx="805" cy="739.5" r="6" fill="none" stroke="#555" stroke-width="1.1"/><rect x="801.5" y="735.5" width="7" height="7" fill="none" stroke="#555" stroke-width="0.9"/><path d="M809.5,744 L815,749.5" stroke="#333" stroke-width="2.2"/><path d="M825,740 H830.5 L827.75,744 Z" fill="#777"/><rect x="839" y="732.5" width="19" height="13.5" fill="#bdbdbd" stroke="#555" stroke-width="1.2"/><path d="M844,748.5 H853" stroke="#555" stroke-width="1.2"/><path d="M863,740 H868.5 L865.75,744 Z" fill="#777"/><rect x="877.5" y="731.5" width="16" height="16" fill="none" stroke="#555" stroke-width="1.1"/><path d="M882.8,731.5 V747.5 M888.2,731.5 V747.5 M877.5,736.8 H893.5 M877.5,742.2 H893.5" stroke="#555" stroke-width="1.1"/><path d="M901,740 H906.5 L903.75,744 Z" fill="#777"/><rect x="915.5" y="732.5" width="18" height="16" fill="none" stroke="#555" stroke-width="1.1"/><path d="M924.5,732.5 V748.5 M915.5,740.5 H933.5" stroke="#555" stroke-width="1.1"/><rect x="918" y="735" width="4" height="3" fill="none" stroke="#777" stroke-width="0.7"/><rect x="927" y="735" width="4" height="3" fill="none" stroke="#777" stroke-width="0.7"/><rect x="918" y="743" width="4" height="3" fill="none" stroke="#777" stroke-width="0.7"/><rect x="927" y="743" width="4" height="3" fill="none" stroke="#777" stroke-width="0.7"/><path d="M939,740 H944.5 L941.75,744 Z" fill="#777"/></svg>
<svg class="a" style="left:0px;top:764px;" width="330" height="50" viewBox="0 764 330 50"><rect x="2.5" y="790" width="2.5" height="15" fill="#8a8a8a"/><path d="M16,790 V805 L5.5,797.5 Z" fill="#8a8a8a"/><path d="M43,790 V805 L32,797.5 Z" fill="#8a8a8a"/><rect x="44.5" y="794" width="2.5" height="7" fill="#8a8a8a"/><path d="M64,789.5 V805.5 L78,797.5 Z" fill="#8a8a8a"/><rect x="93" y="794" width="2.5" height="7" fill="#8a8a8a"/><path d="M97,790 V805 L108,797.5 Z" fill="#8a8a8a"/><path d="M125,790 V805 L136,797.5 Z" fill="#8a8a8a"/><rect x="136.5" y="790" width="2.5" height="15" fill="#8a8a8a"/><rect x="167.5" y="792.5" width="4.5" height="5.5" fill="none" stroke="#555" stroke-width="1.2"/><rect x="174.5" y="792.5" width="4.5" height="5.5" fill="none" stroke="#555" stroke-width="1.2"/><rect x="181.5" y="792.5" width="4.5" height="5.5" fill="none" stroke="#555" stroke-width="1.2"/><rect x="169.5" y="808" width="11" height="6" fill="#7a7a7a"/><rect x="196.5" y="792.5" width="4.5" height="5.5" fill="none" stroke="#555" stroke-width="1.2"/><rect x="203.5" y="792.5" width="4.5" height="5.5" fill="none" stroke="#555" stroke-width="1.2"/><rect x="210.5" y="792.5" width="4.5" height="5.5" fill="none" stroke="#555" stroke-width="1.2"/><rect x="198.5" y="808" width="11" height="6" fill="#7a7a7a"/><rect x="225.5" y="792.5" width="4.5" height="5.5" fill="none" stroke="#555" stroke-width="1.2"/><rect x="232.5" y="792.5" width="4.5" height="5.5" fill="none" stroke="#555" stroke-width="1.2"/><rect x="239.5" y="792.5" width="4.5" height="5.5" fill="none" stroke="#555" stroke-width="1.2"/><rect x="227.5" y="808" width="11" height="6" fill="#7a7a7a"/><path d="M265,787 V806 M255.5,796.5 H274.5" stroke="#222" stroke-width="1.5"/><path d="M265,786 L261.5,790 H268.5 Z M265,807 L261.5,803 H268.5 Z M254.5,796.5 L258.5,793 V800 Z M275.5,796.5 L271.5,793 V800 Z" fill="#222"/><path d="M265,809 V814" stroke="#bbb" stroke-width="1"/><rect x="287" y="787" width="14.5" height="15" fill="none" stroke="#333" stroke-width="1"/><rect x="285.5" y="785.5" width="3" height="3" fill="#1a8ad6"/><rect x="300" y="785.5" width="3" height="3" fill="#1a8ad6"/><rect x="285.5" y="800.5" width="3" height="3" fill="#1a8ad6"/><path d="M295,803.5 L302,796.5 L304.5,799 L297.5,806 L294,807 Z" fill="#f5a30c"/><path d="M302,796.5 L303.5,795 L306,797.5 L304.5,799 Z" fill="#d0202a"/><path d="M294.5,809 V814" stroke="#bbb" stroke-width="1"/><path d="M302,779 H317 V786 L311,790 V814 H308 V790 L302,786 Z" fill="#2e2e2e"/></svg>
<svg class="a" style="left:1575px;top:780px;" width="25" height="34" viewBox="1575 780 25 34"><polygon points="1603.81,796.05 1604.00,798.00 1601.06,799.40 1600.65,800.76 1602.31,803.56 1601.07,805.07 1598.00,803.99 1596.76,804.65 1595.95,807.81 1594.00,808.00 1592.60,805.06 1591.24,804.65 1588.44,806.31 1586.93,805.07 1588.01,802.00 1587.35,800.76 1584.19,799.95 1584.00,798.00 1586.94,796.60 1587.35,795.24 1585.69,792.44 1586.93,790.93 1590.00,792.01 1591.24,791.35 1592.05,788.19 1594.00,788.00 1595.40,790.94 1596.76,791.35 1599.56,789.69 1601.07,790.93 1599.99,794.00 1600.65,795.24" fill="#777"/><circle cx="1594" cy="798" r="3.5" fill="#f4f4f4"/></svg>
<svg class="a" style="left:1578px;top:730px;" width="22" height="34" viewBox="1578 730 22 34"><circle cx="1594" cy="747" r="9" fill="#111"/><path d="M1588,750 L1598,742 M1589,752.5 L1600,744 M1592,753 L1600,747" stroke="#ddd" stroke-width="0.9"/></svg>
<span class="t" style="left:770.00px;top:17.18px;font-size:14.49px;font-weight:400;color:#3c3c3c;transform:scaleX(1.1324)">Untitled*</span>
<span class="t" style="left:171.50px;top:46.68px;font-size:14.49px;font-weight:400;color:#3c3c3c;transform:scaleX(0.8857)">SOLID</span>
<span class="t" style="left:273.75px;top:46.68px;font-size:14.49px;font-weight:400;color:#3c3c3c;transform:scaleX(0.8513)">SURFACE</span>
<span class="t" style="left:394.40px;top:46.68px;font-size:14.49px;font-weight:400;color:#3c3c3c;transform:scaleX(0.8505)">MESH</span>
<span class="t" style="left:489.40px;top:46.68px;font-size:14.49px;font-weight:400;color:#3c3c3c;transform:scaleX(0.8924)">SHEET METAL</span>
<span class="t" style="left:641.40px;top:46.68px;font-size:14.49px;font-weight:400;color:#3c3c3c;transform:scaleX(0.8613)">PLASTIC</span>
<span class="t" style="left:755.70px;top:46.68px;font-size:14.49px;font-weight:400;color:#3c3c3c;transform:scaleX(0.8952)">MANAGE</span>
<span class="t" style="left:869.90px;top:46.68px;font-size:14.49px;font-weight:400;color:#3c3c3c;transform:scaleX(0.8667)">UTILITIES</span>
<span class="t" style="left:996.00px;top:46.68px;font-size:14.49px;font-weight:700;color:#333333;transform:scaleX(0.9016)">SKETCH</span>
<span class="t" style="left:38.75px;top:82.18px;font-size:14.49px;font-weight:700;color:#333333;transform:scaleX(0.9001)">DESIGN</span>
<span class="t" style="left:274.00px;top:120.68px;font-size:14.49px;font-weight:400;color:#3c3c3c;transform:scaleX(0.8581)">CREATE</span>
<span class="t" style="left:552.70px;top:120.68px;font-size:14.49px;font-weight:400;color:#3c3c3c;transform:scaleX(0.8930)">MODIFY</span>
<span class="t" style="left:783.00px;top:120.68px;font-size:14.49px;font-weight:400;color:#3c3c3c;transform:scaleX(0.8862)">CONSTRAINTS</span>
<span class="t" style="left:995.00px;top:120.68px;font-size:14.49px;font-weight:400;color:#3c3c3c;transform:scaleX(0.8628)">CONFIGURE</span>
<span class="t" style="left:1123.00px;top:120.68px;font-size:14.49px;font-weight:400;color:#3c3c3c;transform:scaleX(0.8235)">INSPECT</span>
<span class="t" style="left:1234.00px;top:120.68px;font-size:14.49px;font-weight:400;color:#3c3c3c;transform:scaleX(0.8513)">INSERT</span>
<span class="t" style="left:1343.00px;top:120.68px;font-size:14.49px;font-weight:400;color:#3c3c3c;transform:scaleX(0.8339)">SELECT</span>
<span class="t" style="left:1444.00px;top:120.68px;font-size:14.49px;font-weight:400;color:#3c3c3c;transform:scaleX(0.8797)">FINISH SKETCH</span>
<span class="t" style="left:28.40px;top:157.57px;font-size:15.22px;font-weight:400;color:#3c3c3c;transform:scaleX(0.8545)">BROWSER</span>
<span class="t" style="left:27.00px;top:736.07px;font-size:15.22px;font-weight:400;color:#3c3c3c;transform:scaleX(0.9011)">COMMENTS</span>
<span class="t" style="left:108.00px;top:191.73px;font-size:14.20px;font-weight:700;color:#3a3a3a;transform:scaleX(1.0059)">(Unsaved)</span>
<span class="t" style="left:100.00px;top:221.42px;font-size:13.62px;font-weight:400;color:#3a3a3a;transform:scaleX(1.0610)">Document Settings</span>
<span class="t" style="left:100.00px;top:250.92px;font-size:13.62px;font-weight:400;color:#3a3a3a;transform:scaleX(1.0272)">Named Views</span>
<span class="t" style="left:130.40px;top:280.32px;font-size:13.62px;font-weight:400;color:#3a3a3a;transform:scaleX(1.0795)">Origin</span>
<span class="t" style="left:130.40px;top:309.82px;font-size:13.62px;font-weight:400;color:#3a3a3a;transform:scaleX(1.0110)">Sketches</span>
<span class="t" style="left:130.40px;top:339.22px;font-size:13.62px;font-weight:400;color:#3a3a3a;transform:scaleX(1.0545)">Spur Gear (66 teeth):1</span>
<span class="t" style="left:130.40px;top:368.72px;font-size:13.62px;font-weight:400;color:#3a3a3a;transform:scaleX(1.0545)">Spur Gear (33 teeth):1</span>
<span class="t" style="left:130.40px;top:398.12px;font-size:13.62px;font-weight:400;color:#3a3a3a;transform:scaleX(1.0550)">Spur Gear (22 teeth) (1):1</span>
<span class="t" style="left:1341.00px;top:262.10px;font-size:15.65px;font-weight:400;color:#3c3c3c;transform:scaleX(0.8445)">SKETCH PALETTE</span>
<span class="t" style="left:1338.00px;top:296.73px;font-size:14.20px;font-weight:700;color:#3a3a3a;transform:scaleX(0.9889)">Options</span>
<span class="t" style="left:1323.00px;top:334.53px;font-size:14.20px;font-weight:400;color:#3a3a3a;transform:scaleX(0.9955)">Linetype</span>
<span class="t" style="left:1323.00px;top:372.53px;font-size:14.20px;font-weight:400;color:#3a3a3a;transform:scaleX(1.0438)">Look At</span>
<span class="t" style="left:1323.00px;top:410.53px;font-size:14.20px;font-weight:400;color:#3a3a3a;transform:scaleX(0.9916)">Sketch Grid</span>
<span class="t" style="left:1323.00px;top:448.53px;font-size:14.20px;font-weight:400;color:#3a3a3a;transform:scaleX(0.9203)">Snap</span>
<span class="t" style="left:1323.00px;top:486.53px;font-size:14.20px;font-weight:400;color:#3a3a3a;transform:scaleX(0.9361)">Slice</span>
<span class="t" style="left:1323.00px;top:524.53px;font-size:14.20px;font-weight:400;color:#3a3a3a;transform:scaleX(1.0020)">Profile</span>
<span class="t" style="left:1323.00px;top:562.53px;font-size:14.20px;font-weight:400;color:#3a3a3a;transform:scaleX(0.9686)">Points</span>
<span class="t" style="left:1323.00px;top:600.53px;font-size:14.20px;font-weight:400;color:#3a3a3a;transform:scaleX(1.0118)">Dimensions</span>
<span class="t" style="left:1323.00px;top:638.53px;font-size:14.20px;font-weight:400;color:#3a3a3a;transform:scaleX(1.0172)">Constraints</span>
<span class="t" style="left:1488.00px;top:696.20px;font-size:16.23px;font-weight:400;color:#3a3a3a;transform:scaleX(0.9388)">Finish Sketch</span>
</body></html>
